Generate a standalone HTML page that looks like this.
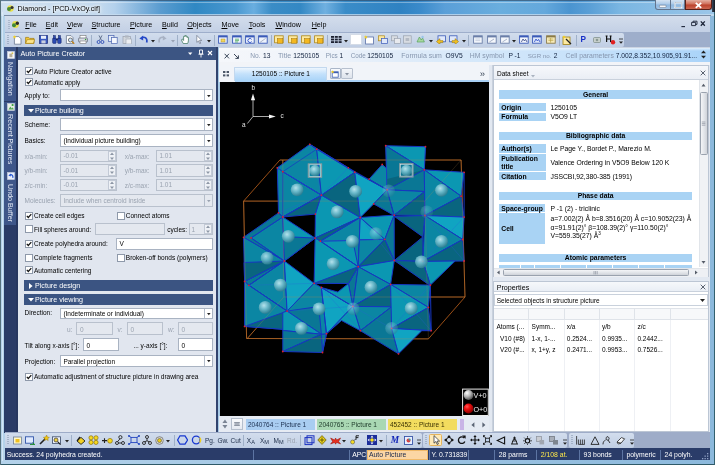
<!DOCTYPE html><html><head><meta charset="utf-8"><title>Diamond - [PCD-VxOy.cif]</title><style>
*{box-sizing:border-box;margin:0;padding:0}
html,body{width:715px;height:465px;overflow:hidden;background:#a6cae6}
body{position:relative;font-family:"Liberation Sans",sans-serif;font-size:6.5px;color:#000;line-height:1}
.a{position:absolute}
.t{position:absolute;white-space:nowrap;line-height:8px;height:8px}
.s{font-size:7.15px}
.w{color:#fff}
.g{color:#9aa3b0}
.box{position:absolute;background:#fff;border:1px solid #a9b3c2}
.dis{background:#e4e8ef;border-color:#b9c1cd}
.cb{position:absolute;width:8px;height:8px;background:#fff;border:1px solid #8e99aa}
.hd{position:absolute;background:#3b5482;color:#fff}
u{text-decoration:underline}
</style></head><body><div id="root" style="position:absolute;left:0;top:0;width:715px;height:465px;will-change:transform">
<div class="a" style="left:0px;top:0px;width:715px;height:465px;background:linear-gradient(90deg,#b4d2ea,#8cb9dc);"></div>
<div class="a" style="left:0px;top:0px;width:715px;height:16px;background:linear-gradient(90deg,#cfe0f1 0,#c2d9ee 14%,#b4d1ec 16%,#5a9cd0 22.4%,#3088c3 27.3%,#4a98d0 33%,#6aaee0 35.5%,#3a8cc6 38%,#3388c4 42%,#70b0e0 45.5%,#3a8cc8 48.3%,#2f82c2 56%,#3a8aca 58.7%,#5a9fd8 62.2%,#6aaede 70%,#64a8dc 76.2%,#4a94d0 79.7%,#5a9fd6 82.5%,#7ab6e2 86.7%,#9cc6e8 100%);"></div>
<div class="a" style="left:0px;top:0px;width:715px;height:1.4px;background:rgba(50,80,110,.7);"></div>
<div class="a" style="left:0px;top:1.6px;width:715px;height:1px;background:rgba(255,255,255,.35);"></div>
<div class="a" style="left:0px;top:14.3px;width:715px;height:1.6px;background:rgba(200,222,240,.75);"></div>
<div class="a" style="left:0px;top:463.7px;width:715px;height:1.3px;background:#2f5a68;"></div>
<div class="a" style="left:713.6px;top:10px;width:1.4px;height:455px;background:#33606e;"></div>
<div class="t s" style="left:17.5px;top:4.7px;text-shadow:0 0 3px #fff,0 0 4px #fff,0 0 5px #e8f2fc">Diamond - [PCD-VxOy.cif]</div>
<svg class="a" style="left:5px;top:4px" width="10" height="9" viewBox="0 0 10 9"><circle cx="5.5" cy="4.5" r="3.2" fill="#e8e04a"/><circle cx="4" cy="5" r="2" fill="#4a8a3a"/><circle cx="7" cy="3.5" r="1.6" fill="#333"/></svg>
<div class="a" style="left:655.2px;top:0px;width:30px;height:10px;background:linear-gradient(#d4e3f3,#a9c8e8 48%,#8db6de 52%,#a4c6e8);border:1px solid #63748c;border-top:0;border-radius:0 0 0 3px"></div>
<div class="a" style="left:670.3px;top:0px;width:1px;height:10px;background:#63748c;"></div>
<div class="a" style="left:685px;top:0px;width:27px;height:10px;background:linear-gradient(#e4b0a2,#cf6f5a 45%,#bb422c 55%,#cb6650);border:1px solid #5a2018;border-top:0;border-radius:0 0 3px 0"></div>
<svg class="a" style="left:655px;top:0px" width="57" height="10" viewBox="0 0 57 10"><rect x="4.400" y="5.200" width="6.600" height="2.200" rx=".6" fill="#fff" stroke="#5a6a80" stroke-width=".5"/><rect x="20" y="2.600" width="6.600" height="5" fill="none" stroke="#fff" stroke-width="1.300"/><rect x="20" y="2.600" width="6.600" height="5" fill="none" stroke="#5a6a80" stroke-width=".3"/><path d="M40.800 2.800l5.400 5M46.200 2.800l-5.400 5" stroke="#fff" stroke-width="1.800"/></svg>
<div class="a" style="left:712px;top:0px;width:3px;height:12px;background:linear-gradient(90deg,#3a4a5e,#10161e);"></div>
<div class="a" style="left:4px;top:15.4px;width:706.5px;height:0.9px;background:#7c8ca4;"></div>
<div class="a" style="left:4.5px;top:15.9px;width:705.5px;height:16.2px;background:linear-gradient(#d3ddec,#c3d0e5);"></div>
<div class="t s" style="left:25.2px;top:20.7px;"><u>F</u>ile</div>
<div class="t s" style="left:45.8px;top:20.7px;"><u>E</u>dit</div>
<div class="t s" style="left:67px;top:20.7px;"><u>V</u>iew</div>
<div class="t s" style="left:91.6px;top:20.7px;"><u>S</u>tructure</div>
<div class="t s" style="left:130px;top:20.7px;"><u>P</u>icture</div>
<div class="t s" style="left:162px;top:20.7px;"><u>B</u>uild</div>
<div class="t s" style="left:187.3px;top:20.7px;"><u>O</u>bjects</div>
<div class="t s" style="left:221.5px;top:20.7px;"><u>M</u>ove</div>
<div class="t s" style="left:248.7px;top:20.7px;"><u>T</u>ools</div>
<div class="t s" style="left:275.4px;top:20.7px;"><u>W</u>indow</div>
<div class="t s" style="left:311.7px;top:20.7px;"><u>H</u>elp</div>
<svg class="a" style="left:8px;top:19px" width="14" height="11" viewBox="0 0 14 11"><path d="M1 1v9" stroke="#8a9ab0" stroke-dasharray="1 1"/><circle cx="7.5" cy="5.5" r="3.4" fill="#e6df4c"/><circle cx="6" cy="6.3" r="2" fill="#3f8a3a"/><circle cx="9.3" cy="4.3" r="1.7" fill="#2a2a2a"/></svg>
<svg class="a" style="left:680px;top:20px" width="26" height="8" viewBox="0 0 26 8"><path d="M1.400 6.600h3.600" stroke="#1c2438" stroke-width="1.100"/><path d="M11.600 2.400h4v3.200h-4zM13 2.400v-1.200h4v3.200h-1.400" fill="none" stroke="#1c2438" stroke-width=".9"/><path d="M20.800 1.400l4 4.400M24.800 1.400l-4 4.400" stroke="#1c2438" stroke-width="1.300"/></svg>
<div class="a" style="left:4.5px;top:32.1px;width:705.5px;height:15px;background:#9eaecb;"></div>
<div class="a" style="left:5px;top:32.6px;width:619px;height:14px;background:linear-gradient(#d2dded,#c0cee4);border-radius:0 2px 2px 0"></div>
<svg class="a" style="left:7.2px;top:34.5px" width="2" height="10" viewBox="0 0 2 10"><path d="M1 0v10" stroke="#7f8fa8" stroke-width="1" stroke-dasharray="1 1"/></svg>
<svg class="a" style="left:13.2px;top:34.5px" width="9" height="10" viewBox="0 0 9 10"><path d="M1.400 1.600h4.400l2.200 2.200v5.400H1.400z" fill="#fff" stroke="#6a7890" stroke-width=".8"/><path d="M1.600 .2l.5 1.100 1.200.2-.9.800.2 1.200-1-.6-1.100.6.200-1.200L-.2 1.500l1.200-.2z" fill="#f6d020"/></svg>
<svg class="a" style="left:25.4px;top:35px" width="10" height="9" viewBox="0 0 10 9"><path d="M.6 2.400h3l1 1h4.400v5H.6z" fill="#f4c838" stroke="#a07808" stroke-width=".7"/><path d="M.6 8.400l1.600-3.800h7.400L8.400 8.400z" fill="#fce48a" stroke="#a07808" stroke-width=".6"/></svg>
<svg class="a" style="left:39.4px;top:35px" width="9" height="9" viewBox="0 0 9 9"><rect x=".5" y=".5" width="8" height="8" fill="#3858c0" stroke="#1c2c78" stroke-width=".7"/><rect x="2" y=".8" width="5" height="3" fill="#e8eefc"/><rect x="2.400" y="5.400" width="4.200" height="3" fill="#c8d0e0"/></svg>
<svg class="a" style="left:51.6px;top:35px" width="10" height="9" viewBox="0 0 10 9"><g fill="#2c4cb4" stroke="#142060" stroke-width=".5"><rect x=".6" y="3" width="3.600" height="5.400" rx=".8"/><rect x="5.600" y="3" width="3.600" height="5.400" rx=".8"/><rect x="1.400" y=".6" width="2" height="3"/><rect x="6.400" y=".6" width="2" height="3"/></g><rect x="4" y="3.600" width="1.800" height="1.800" fill="#142060"/></svg>
<svg class="a" style="left:65.4px;top:35px" width="10" height="9" viewBox="0 0 10 9"><path d="M1.400 .6h4.600l2 2v6H1.400z" fill="#fff" stroke="#6a7890" stroke-width=".8"/><circle cx="5.400" cy="5" r="2" fill="#cfe4f8" stroke="#444" stroke-width=".7"/><path d="M6.800 6.400l2.400 2.400" stroke="#c08010" stroke-width="1.300"/></svg>
<svg class="a" style="left:78.2px;top:35px" width="10" height="9" viewBox="0 0 10 9"><rect x="2" y=".6" width="6" height="3" fill="#fff" stroke="#777" stroke-width=".6"/><rect x=".6" y="3" width="8.800" height="4" rx=".8" fill="#d8dce4" stroke="#5a6270" stroke-width=".7"/><rect x="2" y="6" width="6" height="2.600" fill="#fff" stroke="#777" stroke-width=".6"/><circle cx="7.600" cy="4.400" r=".7" fill="#30a030"/></svg>
<div class="a" style="left:91.4px;top:34.5px;width:1px;height:11px;background:#9fb0c8;"></div>
<svg class="a" style="left:96px;top:35px" width="9" height="9" viewBox="0 0 9 9"><path d="M3 .4l2.600 5M6 .4L3.400 5.400" stroke="#5a6a88" stroke-width=".9"/><circle cx="2.600" cy="7" r="1.500" fill="none" stroke="#2c4cb4" stroke-width=".9"/><circle cx="6.400" cy="7" r="1.500" fill="none" stroke="#2c4cb4" stroke-width=".9"/></svg>
<svg class="a" style="left:108.2px;top:35px" width="10" height="9" viewBox="0 0 10 9"><rect x=".6" y=".6" width="5.400" height="6" fill="#e4ecfa" stroke="#4a64b0" stroke-width=".7"/><rect x="3.600" y="2.600" width="5.600" height="6" fill="#f4f7fd" stroke="#4a64b0" stroke-width=".7"/></svg>
<svg class="a" style="left:121.8px;top:35px" width="10" height="9" viewBox="0 0 10 9"><rect x="1" y="1.600" width="7.600" height="7" fill="#d4d8de" stroke="#9aa2ae" stroke-width=".7"/><rect x="3" y=".4" width="3.600" height="2.200" fill="#b0b6c0"/><rect x="4" y="4" width="5.400" height="5" fill="#eceef2" stroke="#9aa2ae" stroke-width=".6"/></svg>
<div class="a" style="left:135.4px;top:34.5px;width:1px;height:11px;background:#9fb0c8;"></div>
<svg class="a" style="left:139.4px;top:35px" width="9" height="9" viewBox="0 0 9 9"><path d="M7.600 7.600C8.800 3.600 6 1.400 3 2.600" fill="none" stroke="#2448c8" stroke-width="1.700"/><path d="M.4 3.400l3.800-3v5z" fill="#2448c8"/></svg>
<svg class="a" style="left:151px;top:39.5px" width="4" height="3" viewBox="0 0 4 3"><path d="M0 0h4l-2 2.4z" fill="#222"/></svg>
<svg class="a" style="left:158.4px;top:35px" width="9" height="9" viewBox="0 0 9 9"><path d="M1.400 7.600C.2 3.600 3 1.400 6 2.600" fill="none" stroke="#a8b2c4" stroke-width="1.700"/><path d="M8.600 3.400l-3.800-3v5z" fill="#a8b2c4"/></svg>
<svg class="a" style="left:170.6px;top:39.5px" width="4" height="3" viewBox="0 0 4 3"><path d="M0 0h4l-2 2.4z" fill="#98a2b4"/></svg>
<div class="a" style="left:177.4px;top:34.5px;width:1px;height:11px;background:#9fb0c8;"></div>
<svg class="a" style="left:181px;top:35px" width="10" height="9" viewBox="0 0 10 9"><path d="M2.400 8.600C1 6.600.4 5 .8 4.400s1.400.2 1.800 1V1.600c0-.8 1.200-.8 1.200 0V1c0-.8 1.200-.8 1.200 0v.6c0-.8 1.200-.8 1.200 0v1c0-.8 1.200-.8 1.200 0v3.200c0 1.400-.6 2-1 2.800z" fill="#fff" stroke="#2a6a4a" stroke-width=".7"/></svg>
<svg class="a" style="left:196.4px;top:35px" width="6" height="9" viewBox="0 0 6 9"><path d="M.8.400v7l1.700-1.500 1.200 2.700 1-.4L3.500 5.500h2.300z" fill="#fff" stroke="#5a6478" stroke-width=".6"/></svg>
<svg class="a" style="left:207px;top:39.5px" width="4" height="3" viewBox="0 0 4 3"><path d="M0 0h4l-2 2.4z" fill="#222"/></svg>
<div class="a" style="left:213.6px;top:34.5px;width:1px;height:11px;background:#9fb0c8;"></div>
<svg class="a" style="left:218px;top:35px" width="10" height="9" viewBox="0 0 10 9"><rect x=".6" y=".8" width="8.600" height="7.400" fill="#eef3fc" stroke="#3a5ab8" stroke-width=".9"/><rect x=".6" y=".8" width="8.600" height="1.600" fill="#3a5ab8"/><rect x="3" y="4" width="4" height="3" fill="#f4d860" stroke="#a08010" stroke-width=".4"/></svg>
<svg class="a" style="left:232px;top:35px" width="10" height="9" viewBox="0 0 10 9"><rect x=".6" y=".8" width="8.600" height="7.400" fill="#eef3fc" stroke="#3a5ab8" stroke-width=".9"/><rect x=".6" y=".8" width="8.600" height="1.600" fill="#3a5ab8"/><path d="M3 4.200h4M3 5.600h4M3 7h3" stroke="#38a048" stroke-width=".7"/></svg>
<svg class="a" style="left:244.8px;top:35px" width="10" height="9" viewBox="0 0 10 9"><rect x=".6" y=".8" width="8.600" height="7.400" fill="#eef3fc" stroke="#3a5ab8" stroke-width=".9"/><rect x=".6" y=".8" width="8.600" height="1.600" fill="#3a5ab8"/><path d="M6.600 6.600A2 2 0 1 1 6.600 4.400" fill="none" stroke="#2448c8" stroke-width=".9"/></svg>
<svg class="a" style="left:258px;top:35px" width="10" height="9" viewBox="0 0 10 9"><rect x=".6" y=".8" width="8.600" height="7.400" fill="#eef3fc" stroke="#3a5ab8" stroke-width=".9"/><rect x=".6" y=".8" width="8.600" height="1.600" fill="#3a5ab8"/><path d="M2 7.400l5.600-4" stroke="#9aa6bc" stroke-width=".8"/></svg>
<div class="a" style="left:270.7px;top:34.5px;width:1px;height:11px;background:#9fb0c8;"></div>
<svg class="a" style="left:274px;top:35px" width="10" height="9" viewBox="0 0 10 9"><rect x=".6" y=".8" width="8.600" height="7" fill="#fce9a0" stroke="#b08818" stroke-width=".8"/><rect x="3.400" y="3.600" width="5.400" height="4.600" fill="#f4b820" stroke="#a07008" stroke-width=".5"/></svg>
<svg class="a" style="left:287.6px;top:35px" width="10" height="9" viewBox="0 0 10 9"><rect x=".6" y=".8" width="8.600" height="7" fill="#fce9a0" stroke="#b08818" stroke-width=".8"/><rect x="3.400" y="3.600" width="5.400" height="4.600" fill="#f4b820" stroke="#a07008" stroke-width=".5"/></svg>
<svg class="a" style="left:301px;top:35px" width="10" height="9" viewBox="0 0 10 9"><rect x=".6" y=".8" width="8.600" height="7" fill="#fce9a0" stroke="#b08818" stroke-width=".8"/><rect x="3.400" y="3.600" width="5.400" height="4.600" fill="#f4b820" stroke="#a07008" stroke-width=".5"/></svg>
<svg class="a" style="left:314.4px;top:35px" width="10" height="9" viewBox="0 0 10 9"><rect x=".6" y=".8" width="8.600" height="7" fill="#fce9a0" stroke="#b08818" stroke-width=".8"/><rect x="3.400" y="3.600" width="5.400" height="4.600" fill="#f4b820" stroke="#a07008" stroke-width=".5"/></svg>
<div class="a" style="left:326.8px;top:34.5px;width:1px;height:11px;background:#9fb0c8;"></div>
<svg class="a" style="left:330.5px;top:36px" width="11" height="7" viewBox="0 0 11 7"><g fill="#1c2030"><rect x="0" y="0" width="3" height="1.800"/><rect x="3.800" y="0" width="3" height="1.800"/><rect x="7.600" y="0" width="3" height="1.800"/><rect x="0" y="2.600" width="3" height="1.800"/><rect x="3.800" y="2.600" width="3" height="1.800"/><rect x="7.600" y="2.600" width="3" height="1.800"/><rect x="0" y="5.200" width="3" height="1.800"/><rect x="3.800" y="5.200" width="3" height="1.800"/><rect x="7.600" y="5.200" width="3" height="1.800"/></g></svg>
<svg class="a" style="left:344px;top:39.5px" width="4" height="3" viewBox="0 0 4 3"><path d="M0 0h4l-2 2.4z" fill="#222"/></svg>
<div class="a" style="left:350.3px;top:34.4px;width:11.6px;height:10.4px;background:#fff;border:1px solid #d4dbe6"></div>
<svg class="a" style="left:364px;top:34.5px" width="10" height="10" viewBox="0 0 10 10"><rect x="1.600" y="2" width="7.800" height="7" fill="#fff" stroke="#5a70a8" stroke-width=".8"/><path d="M1.800 .2l.6 1.200 1.300.2-1 .9.300 1.300-1.200-.7-1.100.7.200-1.300-.9-.9 1.300-.2z" fill="#f6d020"/></svg>
<svg class="a" style="left:377.5px;top:35px" width="10" height="9" viewBox="0 0 10 9"><rect x=".6" y=".8" width="6" height="5" fill="#fce9a0" stroke="#b08818" stroke-width=".7"/><rect x="3.400" y="3.400" width="6" height="5" fill="#dfe8fa" stroke="#3a5ab8" stroke-width=".7"/></svg>
<svg class="a" style="left:391px;top:35px" width="10" height="9" viewBox="0 0 10 9"><rect x=".6" y=".8" width="6" height="5" fill="#d8dce2" stroke="#9aa2ae" stroke-width=".7"/><rect x="3.400" y="3.400" width="6" height="5" fill="#e8eaee" stroke="#9aa2ae" stroke-width=".7"/></svg>
<svg class="a" style="left:403px;top:35px" width="9" height="9" viewBox="0 0 9 9"><rect x=".6" y=".8" width="7.600" height="7.400" fill="#d8dce2" stroke="#9aa2ae" stroke-width=".7"/><rect x="2.600" y="3" width="3.600" height="3" fill="#b4bac4"/></svg>
<svg class="a" style="left:416.3px;top:35px" width="9" height="9" viewBox="0 0 9 9"><path d="M1 7l2.400-5 1.800 3 1.400-2L8.400 7z" fill="#a8d8a0" stroke="#4a9a50" stroke-width=".6"/><circle cx="6.600" cy="2" r="1.200" fill="#9ac4e8"/></svg>
<svg class="a" style="left:428.6px;top:39.5px" width="4" height="3" viewBox="0 0 4 3"><path d="M0 0h4l-2 2.4z" fill="#222"/></svg>
<svg class="a" style="left:436px;top:35px" width="10" height="9" viewBox="0 0 10 9"><rect x="2" y=".8" width="7.400" height="6" fill="#dfe8fa" stroke="#3a5ab8" stroke-width=".8"/><path d="M.4 6.600l3.600-3v2h3v2h-3v2z" fill="#f0c020" stroke="#806000" stroke-width=".4"/></svg>
<svg class="a" style="left:449.3px;top:35px" width="10" height="9" viewBox="0 0 10 9"><rect x=".6" y=".8" width="7.400" height="6" fill="#dfe8fa" stroke="#3a5ab8" stroke-width=".8"/><path d="M9.600 6.600l-3.600-3v2H3v2h3v2z" fill="#f0c020" stroke="#806000" stroke-width=".4"/></svg>
<svg class="a" style="left:462.4px;top:39.5px" width="4" height="3" viewBox="0 0 4 3"><path d="M0 0h4l-2 2.4z" fill="#222"/></svg>
<div class="a" style="left:468.3px;top:34.5px;width:1px;height:11px;background:#9fb0c8;"></div>
<svg class="a" style="left:472.7px;top:35px" width="10" height="9" viewBox="0 0 10 9"><rect x=".6" y=".8" width="8.600" height="7.400" fill="#f4f7fc" stroke="#6a7ea8" stroke-width=".9"/><rect x=".6" y=".8" width="8.600" height="1.600" fill="#6a7ea8"/><path d="M2.400 4h4.800M2.400 5.600h4.800" stroke="#b0bcd0" stroke-width=".6"/></svg>
<svg class="a" style="left:486.8px;top:35px" width="10" height="9" viewBox="0 0 10 9"><rect x=".6" y=".8" width="8.600" height="7.400" fill="#f4f7fc" stroke="#6a7ea8" stroke-width=".9"/><rect x=".6" y=".8" width="8.600" height="1.600" fill="#6a7ea8"/><path d="M2.400 7l4.600-3" stroke="#8a98b4" stroke-width=".7"/></svg>
<svg class="a" style="left:500px;top:35px" width="10" height="9" viewBox="0 0 10 9"><rect x=".6" y=".8" width="8.600" height="7.400" fill="#f4f7fc" stroke="#6a7ea8" stroke-width=".9"/><rect x=".6" y=".8" width="8.600" height="1.600" fill="#6a7ea8"/><path d="M2.400 7l4.600-3" stroke="#8a98b4" stroke-width=".7"/></svg>
<svg class="a" style="left:512.2px;top:39.5px" width="4" height="3" viewBox="0 0 4 3"><path d="M0 0h4l-2 2.4z" fill="#222"/></svg>
<svg class="a" style="left:518.6px;top:35px" width="10" height="9" viewBox="0 0 10 9"><rect x=".6" y=".8" width="8.600" height="7.400" fill="#f4f7fc" stroke="#3a5ab8" stroke-width=".9"/><rect x=".6" y=".8" width="8.600" height="1.600" fill="#3a5ab8"/><path d="M2.400 7l1.600-3 1.400 2 1.200-1.600L8 7" fill="none" stroke="#1c2c78" stroke-width=".7"/></svg>
<svg class="a" style="left:532.2px;top:35px" width="10" height="9" viewBox="0 0 10 9"><rect x=".6" y=".8" width="8.600" height="7.400" fill="#dfe8fa" stroke="#3a5ab8" stroke-width=".9"/><rect x=".6" y=".8" width="8.600" height="1.600" fill="#3a5ab8"/><path d="M2.400 7l1.600-3 1.400 2 1.200-1.600L8 7" fill="none" stroke="#2448c8" stroke-width=".8"/></svg>
<svg class="a" style="left:546px;top:35px" width="10" height="9" viewBox="0 0 10 9"><rect x=".6" y=".8" width="8.600" height="7.400" fill="#fbf0c0" stroke="#8a7a48" stroke-width=".9"/><rect x=".6" y=".8" width="8.600" height="1.600" fill="#8a7a48"/><path d="M2.400 4h5M2.400 5.600h5M4.600 3v4.600" stroke="#b09838" stroke-width=".6"/></svg>
<div class="a" style="left:558.6px;top:34.5px;width:1px;height:11px;background:#9fb0c8;"></div>
<svg class="a" style="left:562px;top:34.5px" width="10" height="10" viewBox="0 0 10 10"><rect x="1" y="2" width="7" height="7.400" fill="#fce9a0" stroke="#a08010" stroke-width=".8"/><path d="M4 4l5 5" stroke="#222" stroke-width="1.300"/><path d="M2 .2l.5 1 1.100.2-.8.800.2 1.100-1-.5-1 .5.200-1.100-.8-.8 1.100-.2z" fill="#f6d020"/></svg>
<div class="a" style="left:576.2px;top:34.5px;width:1px;height:11px;background:#9fb0c8;"></div>
<div class="t" style="left:580.400px;top:35px;font-weight:bold;font-size:8.200px;color:#1830c8;line-height:9px;height:9px">P</div>
<svg class="a" style="left:592.5px;top:36.5px" width="8" height="6" viewBox="0 0 8 6"><rect x=".5" y=".5" width="7" height="5" rx="1" fill="#c8d0cc" stroke="#7a8a84" stroke-width=".7"/><circle cx="4" cy="3" r="1.300" fill="#8a9a94"/></svg>
<svg class="a" style="left:604.8px;top:34.5px" width="11" height="10" viewBox="0 0 11 10"><path d="M1.600 1v6M5.600 1v6M1.600 4h4M.6 1h2M4.600 1h2" stroke="#111" stroke-width="1.200"/><circle cx="8" cy="7.200" r="2.200" fill="#e02020"/></svg>
<svg class="a" style="left:619px;top:38px" width="4" height="7" viewBox="0 0 4 7"><path d="M0 1h4" stroke="#222" stroke-width=".8"/><path d="M0 3.4h4l-2 2.4z" fill="#222"/></svg>
<div class="a" style="left:0px;top:0px;width:0.8px;height:465px;background:#55707c;"></div>
<div class="a" style="left:1.6px;top:12px;width:1.2px;height:449px;background:rgba(230,242,250,.6);"></div>
<div class="a" style="left:4px;top:46.6px;width:12.2px;height:386.2px;background:#2a3b66;"></div>
<div class="a" style="left:4px;top:46.6px;width:12.2px;height:54.4px;background:#3e5689;"></div>
<div class="a" style="left:4px;top:101.6px;width:12.2px;height:68px;background:#3e5689;"></div>
<div class="a" style="left:4px;top:170.2px;width:12.2px;height:54.4px;background:#3e5689;"></div>
<div class="a" style="left:16px;top:46.6px;width:1.6px;height:386.2px;background:#27375f;"></div>
<svg class="a" style="left:6.6px;top:51px" width="8" height="8" viewBox="0 0 8 8"><rect x=".4" y=".4" width="7.200" height="7.200" fill="#f4f6fa" stroke="#c8d0e0" stroke-width=".5"/><rect x="2.400" y="2.600" width="3" height="3.600" fill="#b8b098"/><rect x="4.600" y="1.400" width="1.600" height="1.600" fill="#d8c048"/></svg>
<div class="t s" style="left:6.200px;top:62.3px;color:#e3e9f4;transform-origin:0 0;transform:translate(8px,0) rotate(90deg)">Navigation</div>
<svg class="a" style="left:6.6px;top:103.4px" width="8" height="8" viewBox="0 0 8 8"><rect x=".4" y=".4" width="7.200" height="7.200" fill="#e8f0e4" stroke="#c8d0e0" stroke-width=".5"/><path d="M1.400 6.400l2-3 1.400 2 1-1.200 1 2.200z" fill="#58a858"/><circle cx="5.600" cy="2" r="1.100" fill="#38a038"/></svg>
<div class="t s" style="left:6.200px;top:114px;color:#e3e9f4;transform-origin:0 0;transform:translate(8px,0) rotate(90deg)">Recent Pictures</div>
<svg class="a" style="left:6.6px;top:172px" width="8" height="8" viewBox="0 0 8 8"><rect x=".4" y=".4" width="7.200" height="7.200" fill="#e8eefa" stroke="#c8d0e0" stroke-width=".5"/><path d="M5.800 5.800C6.400 3.400 4.600 2.200 3 3" fill="none" stroke="#2858d0" stroke-width="1.200"/><path d="M1.400 3.400l2.400-2v3.200z" fill="#2858d0"/></svg>
<div class="t s" style="left:6.200px;top:184px;color:#e3e9f4;transform-origin:0 0;transform:translate(8px,0) rotate(90deg)">Undo Buffer</div>
<div class="a" style="left:17.6px;top:46.6px;width:199px;height:13.4px;background:#3c5583;"></div>
<div class="a" style="left:17.6px;top:60px;width:199px;height:372.8px;background:#e1e6ef;"></div>
<div class="a" style="left:216.2px;top:46.6px;width:2.3px;height:386.2px;background:#31436e;"></div>
<div class="t s w" style="left:20.5px;top:50.4px;">Auto Picture Creator</div>
<svg class="a" style="left:187px;top:48px" width="28" height="11" viewBox="0 0 28 11"><path d="M1 4.5h4.4l-2.2 2.4z" fill="#fff"/><path d="M12.5 2h3v4h-3zM11.5 6.2h5M14 6.2v3.3" stroke="#fff" stroke-width=".9" fill="none"/><path d="M21 3l4 4M25 3l-4 4" stroke="#fff" stroke-width="1.1"/></svg>
<div class="cb" style="left:24.5px;top:67px"></div>
<svg class="a" style="left:24.5px;top:67px" width="8" height="8" viewBox="0 0 8 8"><path d="M1.8 3.8l1.5 1.7 3-3.4" stroke="#111" stroke-width="1.2" fill="none"/></svg>
<div class="t " style="left:34px;top:67.7px;">Auto Picture Creator active</div>
<div class="cb" style="left:24.5px;top:78px"></div>
<svg class="a" style="left:24.5px;top:78px" width="8" height="8" viewBox="0 0 8 8"><path d="M1.8 3.8l1.5 1.7 3-3.4" stroke="#111" stroke-width="1.2" fill="none"/></svg>
<div class="t " style="left:34px;top:78.5px;">Automatic apply</div>
<div class="t " style="left:24.5px;top:91.5px;">Apply to:</div>
<div class="box " style="left:60.4px;top:89.4px;width:152.6px;height:12px"></div>
<div class="a" style="left:204.0px;top:90.4px;width:1px;height:10px;background:#b4bdca;"></div>
<svg class="a" style="left:206.8px;top:94.60000000000001px" width="4" height="3" viewBox="0 0 4 3"><path d="M0 0h3.600l-1.800 2.200z" fill="#222"/></svg>
<div class="a" style="left:24.4px;top:105.2px;width:188.8px;height:10.4px;background:#3b5482;"></div>
<svg class="a" style="left:27.5px;top:108.80000000000001px" width="6" height="4" viewBox="0 0 6 4"><path d="M0 0h6l-3 3.6z" fill="#fff"/></svg>
<div class="t s w" style="left:35px;top:106.7px;">Picture building</div>
<div class="t " style="left:24.5px;top:121.1px;">Scheme:</div>
<div class="box " style="left:60.4px;top:118.2px;width:152.6px;height:12.6px"></div>
<div class="a" style="left:204.0px;top:119.2px;width:1px;height:10.6px;background:#b4bdca;"></div>
<svg class="a" style="left:206.8px;top:123.7px" width="4" height="3" viewBox="0 0 4 3"><path d="M0 0h3.600l-1.800 2.200z" fill="#222"/></svg>
<div class="t " style="left:24.5px;top:136.7px;">Basics:</div>
<div class="box " style="left:60.4px;top:134.2px;width:152.6px;height:12.6px"></div>
<div class="a" style="left:204.0px;top:135.2px;width:1px;height:10.6px;background:#b4bdca;"></div>
<svg class="a" style="left:206.8px;top:139.7px" width="4" height="3" viewBox="0 0 4 3"><path d="M0 0h3.600l-1.800 2.200z" fill="#222"/></svg>
<div class="t " style="left:63.4px;top:137.0px;">(Individual picture building)</div>
<div class="t g" style="left:24.5px;top:152.5px;">x/a-min:</div>
<div class="box dis" style="left:60.4px;top:149.7px;width:56.6px;height:12.4px"></div>
<div class="a" style="left:108.0px;top:150.7px;width:8px;height:10.4px;background:#eef1f6;border:1px solid #c3cad6"></div>
<svg class="a" style="left:110.0px;top:151.7px" width="4" height="8.4" viewBox="0 0 4 8.4"><path d="M0 3l2-2.5 2 2.5zM0 5.4l2 2.5 2-2.5z" fill="#8d97a6"/></svg>
<div class="t g" style="left:63.4px;top:152.4px;">-0.01</div>
<div class="t g" style="left:124.7px;top:152.5px;">x/a-max:</div>
<div class="box dis" style="left:156.4px;top:149.7px;width:56.6px;height:12.4px"></div>
<div class="a" style="left:204.0px;top:150.7px;width:8px;height:10.4px;background:#eef1f6;border:1px solid #c3cad6"></div>
<svg class="a" style="left:206.0px;top:151.7px" width="4" height="8.4" viewBox="0 0 4 8.4"><path d="M0 3l2-2.5 2 2.5zM0 5.4l2 2.5 2-2.5z" fill="#8d97a6"/></svg>
<div class="t g" style="left:159.4px;top:152.4px;">1.01</div>
<div class="t g" style="left:24.5px;top:167.0px;">y/b-min:</div>
<div class="box dis" style="left:60.4px;top:164.2px;width:56.6px;height:12.4px"></div>
<div class="a" style="left:108.0px;top:165.2px;width:8px;height:10.4px;background:#eef1f6;border:1px solid #c3cad6"></div>
<svg class="a" style="left:110.0px;top:166.2px" width="4" height="8.4" viewBox="0 0 4 8.4"><path d="M0 3l2-2.5 2 2.5zM0 5.4l2 2.5 2-2.5z" fill="#8d97a6"/></svg>
<div class="t g" style="left:63.4px;top:166.9px;">-0.01</div>
<div class="t g" style="left:124.7px;top:167.0px;">y/b-max:</div>
<div class="box dis" style="left:156.4px;top:164.2px;width:56.6px;height:12.4px"></div>
<div class="a" style="left:204.0px;top:165.2px;width:8px;height:10.4px;background:#eef1f6;border:1px solid #c3cad6"></div>
<svg class="a" style="left:206.0px;top:166.2px" width="4" height="8.4" viewBox="0 0 4 8.4"><path d="M0 3l2-2.5 2 2.5zM0 5.4l2 2.5 2-2.5z" fill="#8d97a6"/></svg>
<div class="t g" style="left:159.4px;top:166.9px;">1.01</div>
<div class="t g" style="left:24.5px;top:181.5px;">z/c-min:</div>
<div class="box dis" style="left:60.4px;top:178.7px;width:56.6px;height:12.4px"></div>
<div class="a" style="left:108.0px;top:179.7px;width:8px;height:10.4px;background:#eef1f6;border:1px solid #c3cad6"></div>
<svg class="a" style="left:110.0px;top:180.7px" width="4" height="8.4" viewBox="0 0 4 8.4"><path d="M0 3l2-2.5 2 2.5zM0 5.4l2 2.5 2-2.5z" fill="#8d97a6"/></svg>
<div class="t g" style="left:63.4px;top:181.4px;">-0.01</div>
<div class="t g" style="left:124.7px;top:181.5px;">z/c-max:</div>
<div class="box dis" style="left:156.4px;top:178.7px;width:56.6px;height:12.4px"></div>
<div class="a" style="left:204.0px;top:179.7px;width:8px;height:10.4px;background:#eef1f6;border:1px solid #c3cad6"></div>
<svg class="a" style="left:206.0px;top:180.7px" width="4" height="8.4" viewBox="0 0 4 8.4"><path d="M0 3l2-2.5 2 2.5zM0 5.4l2 2.5 2-2.5z" fill="#8d97a6"/></svg>
<div class="t g" style="left:159.4px;top:181.4px;">1.01</div>
<div class="t g" style="left:24.5px;top:197.4px;">Molecules:</div>
<div class="box dis" style="left:60.4px;top:194.2px;width:152.6px;height:13px"></div>
<div class="a" style="left:204.0px;top:195.2px;width:1px;height:11px;background:#b4bdca;"></div>
<svg class="a" style="left:206.8px;top:199.89999999999998px" width="4" height="3" viewBox="0 0 4 3"><path d="M0 0h3.600l-1.800 2.200z" fill="#9aa3b0"/></svg>
<div class="t g" style="left:63.4px;top:197.2px;">Include when centroid inside</div>
<div class="cb" style="left:24.5px;top:211.6px"></div>
<svg class="a" style="left:24.5px;top:211.6px" width="8" height="8" viewBox="0 0 8 8"><path d="M1.8 3.8l1.5 1.7 3-3.4" stroke="#111" stroke-width="1.2" fill="none"/></svg>
<div class="t " style="left:34px;top:212.4px;">Create cell edges</div>
<div class="cb" style="left:116.5px;top:211.6px"></div>
<div class="t " style="left:125.8px;top:212.4px;">Connect atoms</div>
<div class="cb" style="left:24.5px;top:225.2px"></div>
<div class="t " style="left:34px;top:226.1px;">Fill spheres around:</div>
<div class="box dis" style="left:94.9px;top:223px;width:70.4px;height:12.4px"></div>
<div class="t " style="left:167.2px;top:226.1px;">cycles:</div>
<div class="box dis" style="left:188.5px;top:223px;width:24.5px;height:12.4px"></div>
<div class="a" style="left:204.0px;top:224px;width:8px;height:10.4px;background:#eef1f6;border:1px solid #c3cad6"></div>
<svg class="a" style="left:206.0px;top:225px" width="4" height="8.4" viewBox="0 0 4 8.4"><path d="M0 3l2-2.5 2 2.5zM0 5.4l2 2.5 2-2.5z" fill="#8d97a6"/></svg>
<div class="t g" style="left:191.5px;top:225.7px;">1</div>
<div class="cb" style="left:24.5px;top:239.5px"></div>
<svg class="a" style="left:24.5px;top:239.5px" width="8" height="8" viewBox="0 0 8 8"><path d="M1.8 3.8l1.5 1.7 3-3.4" stroke="#111" stroke-width="1.2" fill="none"/></svg>
<div class="t " style="left:34px;top:240.3px;">Create polyhedra around:</div>
<div class="box " style="left:116px;top:237.8px;width:97px;height:11.8px"></div>
<div class="t " style="left:119.5px;top:240.3px;">V</div>
<div class="cb" style="left:24.5px;top:253.5px"></div>
<div class="t " style="left:34px;top:254.3px;">Complete fragments</div>
<div class="cb" style="left:116.5px;top:253.5px"></div>
<div class="t " style="left:125.8px;top:254.3px;">Broken-off bonds (polymers)</div>
<div class="cb" style="left:24.5px;top:266px"></div>
<svg class="a" style="left:24.5px;top:266px" width="8" height="8" viewBox="0 0 8 8"><path d="M1.8 3.8l1.5 1.7 3-3.4" stroke="#111" stroke-width="1.2" fill="none"/></svg>
<div class="t " style="left:34px;top:266.7px;">Automatic centering</div>
<div class="a" style="left:24.4px;top:280px;width:188.8px;height:11px;background:#3b5482;"></div>
<svg class="a" style="left:28.5px;top:282.5px" width="4" height="6" viewBox="0 0 4 6"><path d="M0 0v6l3.6-3z" fill="#fff"/></svg>
<div class="t s w" style="left:35px;top:281.8px;">Picture design</div>
<div class="a" style="left:24.4px;top:294px;width:188.8px;height:10.6px;background:#3b5482;"></div>
<svg class="a" style="left:27.5px;top:297.7px" width="6" height="4" viewBox="0 0 6 4"><path d="M0 0h6l-3 3.6z" fill="#fff"/></svg>
<div class="t s w" style="left:35px;top:295.6px;">Picture viewing</div>
<div class="t " style="left:24.5px;top:309.4px;">Direction:</div>
<div class="box " style="left:60.4px;top:307.8px;width:152.6px;height:11.2px"></div>
<div class="a" style="left:204.0px;top:308.8px;width:1px;height:9.2px;background:#b4bdca;"></div>
<svg class="a" style="left:206.8px;top:312.6px" width="4" height="3" viewBox="0 0 4 3"><path d="M0 0h3.600l-1.800 2.200z" fill="#222"/></svg>
<div class="t " style="left:63.4px;top:309.9px;">(Indeterminate or individual)</div>
<div class="t g" style="left:67px;top:325.7px;">u:</div>
<div class="box dis" style="left:76.4px;top:322px;width:36.2px;height:13.4px"></div>
<div class="t g" style="left:80px;top:325.7px;">0</div>
<div class="t g" style="left:117.5px;top:325.7px;">v:</div>
<div class="box dis" style="left:127px;top:322px;width:36px;height:13.4px"></div>
<div class="t g" style="left:130.6px;top:325.7px;">0</div>
<div class="t g" style="left:167.9px;top:325.7px;">w:</div>
<div class="box dis" style="left:178px;top:322px;width:35px;height:13.4px"></div>
<div class="t g" style="left:181.6px;top:325.7px;">0</div>
<div class="t " style="left:24.5px;top:341.5px;">Tilt along x-axis [&deg;]:</div>
<div class="box " style="left:83px;top:338.4px;width:36px;height:12.6px"></div>
<div class="t " style="left:86.4px;top:341.5px;">0</div>
<div class="t " style="left:133.4px;top:341.5px;">... y-axis [&deg;]:</div>
<div class="box " style="left:178px;top:338.4px;width:35px;height:12.6px"></div>
<div class="t " style="left:181.6px;top:341.5px;">0</div>
<div class="t " style="left:24.5px;top:357.7px;">Projection:</div>
<div class="box " style="left:60.4px;top:355.2px;width:152.6px;height:12px"></div>
<div class="a" style="left:204.0px;top:356.2px;width:1px;height:10px;background:#b4bdca;"></div>
<svg class="a" style="left:206.8px;top:360.4px" width="4" height="3" viewBox="0 0 4 3"><path d="M0 0h3.600l-1.800 2.200z" fill="#222"/></svg>
<div class="t " style="left:63.4px;top:357.7px;">Parallel projection</div>
<div class="cb" style="left:24.5px;top:372.6px"></div>
<svg class="a" style="left:24.5px;top:372.6px" width="8" height="8" viewBox="0 0 8 8"><path d="M1.8 3.8l1.5 1.7 3-3.4" stroke="#111" stroke-width="1.2" fill="none"/></svg>
<div class="t " style="left:34px;top:373.3px;">Automatic adjustment of structure picture in drawing area</div>
<div class="a" style="left:218.5px;top:46.6px;width:491.5px;height:15.2px;background:linear-gradient(90deg,#f5f7fb 0,#eef3fa 22%,#e0ecf9 37%,#d3e7fa 55%,#c6e1fa 75%,#a9d3f9 100%);"></div>
<div class="a" style="left:218.5px;top:46.6px;width:491.5px;height:4px;background:linear-gradient(rgba(255,255,255,.85),rgba(255,255,255,0));"></div>
<div class="a" style="left:218.5px;top:46.6px;width:491.5px;height:1px;background:#ccd4e2;"></div>
<div class="a" style="left:218.5px;top:61.6px;width:491.5px;height:6px;background:#f2f4f8;"></div>
<svg class="a" style="left:223.6px;top:52.6px" width="16" height="7" viewBox="0 0 16 7"><path d="M.6.800l4.400 4.600M5 .800L.6 5.400" stroke="#3a4658" stroke-width="1"/><path d="M10 1l4.400 4.400M14.400 2.400v3h-3" stroke="#3a4658" stroke-width="1" fill="none"/></svg>
<div class="t " style="left:250.3px;top:51.7px;font-size:6.6px;color:#8696ae">No.</div>
<div class="t " style="left:263px;top:51.7px;font-size:6.650px;color:#10203c">13</div>
<div class="t " style="left:278px;top:51.7px;font-size:7.1px;color:#8696ae">Title</div>
<div class="t " style="left:293.3px;top:51.7px;font-size:6.650px;color:#10203c">1250105</div>
<div class="t " style="left:325.8px;top:51.7px;font-size:6.3px;color:#8696ae">Pics</div>
<div class="t " style="left:339.6px;top:51.7px;font-size:6.650px;color:#10203c">1</div>
<div class="t " style="left:350.7px;top:51.7px;font-size:6.3px;color:#8696ae">Code</div>
<div class="t " style="left:367.3px;top:51.7px;font-size:6.650px;color:#10203c">1250105</div>
<div class="t " style="left:401.3px;top:51.7px;font-size:6.95px;color:#8696ae">Formula sum</div>
<div class="t " style="left:445.6px;top:51.7px;font-size:6.650px;color:#10203c">O9V5</div>
<div class="t " style="left:469.8px;top:51.7px;font-size:6.85px;color:#8696ae">HM symbol</div>
<div class="t " style="left:508.4px;top:51.7px;font-size:6.650px;color:#10203c">P -1</div>
<div class="t " style="left:527.7px;top:51.7px;font-size:6.2px;color:#8696ae">SGR no.</div>
<div class="t " style="left:553.8px;top:51.7px;font-size:6.650px;color:#10203c">2</div>
<div class="t " style="left:565.5px;top:51.7px;font-size:6.85px;color:#8696ae">Cell parameters</div>
<div class="t " style="left:615.8px;top:51.7px;font-size:6.650px;color:#10203c">7.002,8.352,10.905,91.91...</div>
<svg class="a" style="left:701.4px;top:50px" width="5" height="9" viewBox="0 0 5 9"><path d="M0 3.200h5L2.500 .4zM0 5.800h5L2.500 8.600z" fill="#222"/></svg>
<div class="a" style="left:218.5px;top:64.6px;width:270.7px;height:15.6px;background:#f1f4f9;"></div>
<div class="a" style="left:218.5px;top:80px;width:272.5px;height:1.8px;background:#a9d0f5;"></div>
<div class="a" style="left:218.5px;top:80px;width:16px;height:1.8px;background:#f2f5fa;"></div>
<svg class="a" style="left:223px;top:70.6px" width="7" height="6" viewBox="0 0 7 6"><g fill="#4a5668"><rect x="0" y="0" width="2.400" height="2"/><rect x="3.600" y="0" width="2.400" height="2"/><rect x="0" y="3.400" width="2.400" height="2"/><rect x="3.600" y="3.400" width="2.400" height="2"/></g></svg>
<div class="a" style="left:234.4px;top:66.6px;width:92.6px;height:14px;background:linear-gradient(#edf6fe,#c4e1fb 45%,#a8d3f8);border:1px solid #c3d8ee;border-bottom:0;border-radius:1px 1px 0 0"></div>
<div class="t " style="left:251.8px;top:70.3px;">1250105 :: Picture 1</div>
<div class="a" style="left:329.6px;top:68.2px;width:11px;height:11px;background:linear-gradient(#f8fafd,#dfe7f2);border:1px solid #aab6c8;border-radius:1px"></div>
<svg class="a" style="left:331.4px;top:70px" width="8" height="8" viewBox="0 0 8 8"><rect x="1.200" y="1.800" width="6" height="5.400" fill="#fff" stroke="#3f5fb0" stroke-width=".8"/><rect x="1.200" y="1.800" width="6" height="1.400" fill="#3f5fb0"/><path d="M1.600 .2l.5 1 1.100.2-.8.800.2 1.100-1-.5-1 .5.200-1.100L0 1.400l1.100-.2z" fill="#f4d020"/></svg>
<div class="a" style="left:341px;top:68.2px;width:12px;height:11px;background:linear-gradient(#f4f6fa,#dde3ec);border:1px solid #b7c0ce;border-radius:1px"></div>
<svg class="a" style="left:345px;top:73px" width="4" height="3" viewBox="0 0 4 3"><path d="M0 0h4l-2 2.400z" fill="#8a93a2"/></svg>
<div class="t " style="left:479.8px;top:69.5px;font-size:9.500px;color:#3a4658">&raquo;</div>
<div class="a" style="left:220.2px;top:81.8px;width:269px;height:334px;background:#000;"></div>
<svg class="a" style="left:220.2px;top:81.5px" width="269" height="335" viewBox="220.2 81.5 269 335"><defs><radialGradient id="sg" cx="40%" cy="35%" r="65%"><stop offset="0" stop-color="#b4e2ec"/><stop offset=".45" stop-color="#6cbacb"/><stop offset="1" stop-color="#2c7f93"/></radialGradient><radialGradient id="gg" cx="35%" cy="30%" r="70%"><stop offset="0" stop-color="#fff"/><stop offset=".5" stop-color="#b8b8b8"/><stop offset="1" stop-color="#5a5a5a"/></radialGradient><radialGradient id="rg" cx="35%" cy="30%" r="70%"><stop offset="0" stop-color="#ff5a5a"/><stop offset=".4" stop-color="#ee1010"/><stop offset="1" stop-color="#8a0000"/></radialGradient></defs><polyline points="280.1,159.5 461.3,159.5 465.2,296.5 284.0,296.5 283.0,159.5" fill="none" stroke="#c0621c" stroke-width="0.8" opacity="1"/>
<polyline points="280.1,159.5 243.8,200.6 246.8,338.0 428.6,338.4 465.2,296.5" fill="none" stroke="#c0621c" stroke-width="0.8" opacity="1"/>
<polyline points="243.8,200.6 283.0,200.6" fill="none" stroke="#c0621c" stroke-width="0.8" opacity="1"/>
<polyline points="247.5,338.0 284.0,296.5" fill="none" stroke="#c0621c" stroke-width="0.8" opacity="1"/>
<polygon points="369.3,178.6 382.4,164.0 387.0,168.0 387.3,189.3" fill="#0b86a3" stroke="#1636c2" stroke-width="1.0" stroke-linejoin="round"/>
<polygon points="310.0,143.8 277.5,167.3 283.0,171.2 321.6,194.7 316.9,148.7" fill="#0b86a3" stroke="#1636c2" stroke-width="1.0" stroke-linejoin="round"/>
<polygon points="310.0,143.8 316.9,148.7 355.0,171.7 348.5,167.3" fill="#0a7795" stroke="#1636c2" stroke-width="1.0" stroke-linejoin="round"/>
<polygon points="316.9,148.7 355.0,171.7 321.6,194.7" fill="#0b97b2" stroke="#1636c2" stroke-width="1.0" stroke-linejoin="round"/>
<polygon points="277.5,167.3 283.0,171.2 321.6,194.7 283.0,216.5 278.7,212.4" fill="#0b86a3" stroke="#1636c2" stroke-width="1.0" stroke-linejoin="round"/>
<polygon points="283.0,216.5 321.6,194.7 315.6,213.6" fill="#09657f" stroke="#1636c2" stroke-width="1.0" stroke-linejoin="round"/>
<polyline points="283.0,171.2 321.6,194.7 283.0,216.5" fill="none" stroke="#1636c2" stroke-width="1.0" opacity="1"/>
<polygon points="321.6,194.7 355.0,171.7 360.4,217.0" fill="#09657f" stroke="#1636c2" stroke-width="1.0" stroke-linejoin="round"/>
<polygon points="321.6,194.7 360.4,217.0 315.3,237.6 315.6,213.6" fill="#0b97b2" stroke="#1636c2" stroke-width="1.0" stroke-linejoin="round"/>
<polygon points="355.0,171.7 387.3,189.3 373.9,203.4 360.4,217.0" fill="#10a4c2" stroke="#1636c2" stroke-width="1.0" stroke-linejoin="round"/>
<polygon points="387.3,189.3 373.9,203.4 394.2,214.9" fill="#0a7795" stroke="#1636c2" stroke-width="1.0" stroke-linejoin="round"/>
<polygon points="385.9,145.2 425.7,146.2 424.5,169.3" fill="#0b97b2" stroke="#1636c2" stroke-width="1.0" stroke-linejoin="round"/>
<polygon points="385.9,145.2 424.5,169.3 387.3,189.3" fill="#0a7795" stroke="#1636c2" stroke-width="1.0" stroke-linejoin="round"/>
<polygon points="424.5,169.3 387.2,178.5 387.3,189.3" fill="#09657f" stroke="none" stroke-width="1.0" stroke-linejoin="round"/>
<polygon points="387.3,189.3 424.5,169.3 424.8,191.0" fill="#0a7795" stroke="#1636c2" stroke-width="1.0" stroke-linejoin="round"/>
<polygon points="387.3,189.3 424.8,191.0 394.4,214.6" fill="#0b86a3" stroke="#1636c2" stroke-width="1.0" stroke-linejoin="round"/>
<polygon points="424.8,191.0 425.1,215.0 394.4,214.6" fill="#09657f" stroke="#1636c2" stroke-width="1.0" stroke-linejoin="round"/>
<polygon points="424.5,169.3 464.3,171.8 461.3,195.7" fill="#0b97b2" stroke="#1636c2" stroke-width="1.0" stroke-linejoin="round"/>
<polygon points="424.5,169.3 461.3,195.7 425.1,215.0" fill="#0b86a3" stroke="#1636c2" stroke-width="1.0" stroke-linejoin="round"/>
<polygon points="461.3,195.7 464.3,216.6 425.1,215.0" fill="#09657f" stroke="#1636c2" stroke-width="1.0" stroke-linejoin="round"/>
<polyline points="464.3,171.8 464.3,216.6" fill="none" stroke="#1636c2" stroke-width="1.0" opacity="1"/>
<polygon points="315.3,237.6 360.4,217.0 320.6,240.7" fill="#09657f" stroke="#1636c2" stroke-width="1.0" stroke-linejoin="round"/>
<polygon points="244.8,280.9 284.6,260.5 249.1,284.8" fill="#0a7795" stroke="#1636c2" stroke-width="1.0" stroke-linejoin="round"/>
<polygon points="358.4,266.2 348.6,283.0 353.1,305.9" fill="#0a7795" stroke="#1636c2" stroke-width="1.0" stroke-linejoin="round"/>
<polygon points="326.7,333.2 321.6,333.7 322.7,352.0" fill="#0a7795" stroke="#1636c2" stroke-width="1.0" stroke-linejoin="round"/>
<polygon points="278.7,212.4 243.8,236.8 284.6,260.5 283.0,216.5" fill="#0a7795" stroke="#1636c2" stroke-width="1.0" stroke-linejoin="round"/>
<polygon points="251.3,237.4 284.6,260.5 283.0,216.5" fill="#0b86a3" stroke="#1636c2" stroke-width="1.0" stroke-linejoin="round"/>
<polygon points="283.0,216.5 315.3,237.6 284.6,260.5" fill="#0b97b2" stroke="#1636c2" stroke-width="1.0" stroke-linejoin="round"/>
<polygon points="283.6,236.0 315.3,237.6 284.6,260.5" fill="#0a7795" stroke="#1636c2" stroke-width="1.0" stroke-linejoin="round"/>
<polygon points="243.8,236.8 284.6,260.5 244.8,280.9" fill="#0b86a3" stroke="#1636c2" stroke-width="1.0" stroke-linejoin="round"/>
<polygon points="244.3,262.0 284.6,260.5 244.8,280.9" fill="#09657f" stroke="#1636c2" stroke-width="1.0" stroke-linejoin="round"/>
<polygon points="284.6,260.5 249.1,284.8 287.3,310.6" fill="#0b86a3" stroke="#1636c2" stroke-width="1.0" stroke-linejoin="round"/>
<polygon points="284.6,260.5 314.3,282.8 287.3,310.6" fill="#10a4c2" stroke="#1636c2" stroke-width="1.0" stroke-linejoin="round"/>
<polygon points="315.3,237.6 320.6,240.7 360.4,217.0 358.4,266.2" fill="#0b86a3" stroke="#1636c2" stroke-width="1.0" stroke-linejoin="round"/>
<polygon points="320.6,240.7 353.0,240.0 358.4,266.2" fill="#0b97b2" stroke="#1636c2" stroke-width="1.0" stroke-linejoin="round"/>
<polygon points="360.4,217.0 385.0,238.8 359.5,239.4" fill="#10a4c2" stroke="#1636c2" stroke-width="1.0" stroke-linejoin="round"/>
<polygon points="359.5,239.4 385.0,238.8 358.4,266.2" fill="#0b86a3" stroke="#1636c2" stroke-width="1.0" stroke-linejoin="round"/>
<polygon points="385.0,238.8 394.5,260.0 358.4,266.2" fill="#09657f" stroke="#1636c2" stroke-width="1.0" stroke-linejoin="round"/>
<polygon points="360.4,217.0 394.4,214.6 385.0,238.8" fill="#0b97b2" stroke="#1636c2" stroke-width="1.0" stroke-linejoin="round"/>
<polygon points="394.4,214.6 394.5,260.0 385.0,238.8" fill="#0a7795" stroke="#1636c2" stroke-width="1.0" stroke-linejoin="round"/>
<polygon points="315.3,237.6 320.6,240.7 358.4,266.2 348.6,283.0 314.3,282.8" fill="#0b97b2" stroke="#1636c2" stroke-width="1.0" stroke-linejoin="round"/>
<polygon points="314.3,282.8 358.4,266.2 348.6,283.0" fill="#09657f" stroke="#1636c2" stroke-width="1.0" stroke-linejoin="round"/>
<polygon points="358.4,266.2 394.5,260.0 390.8,283.9" fill="#0b97b2" stroke="#1636c2" stroke-width="1.0" stroke-linejoin="round"/>
<polygon points="394.7,216.0 425.1,215.0 423.1,236.4" fill="#09657f" stroke="#1636c2" stroke-width="1.0" stroke-linejoin="round"/>
<polygon points="423.1,236.4 423.1,260.9 394.5,260.0" fill="#09657f" stroke="#1636c2" stroke-width="1.0" stroke-linejoin="round"/>
<polygon points="425.1,215.0 464.3,216.6 462.9,239.0" fill="#10a4c2" stroke="#1636c2" stroke-width="1.0" stroke-linejoin="round"/>
<polygon points="425.1,215.0 462.9,239.0 423.1,260.9" fill="#0b86a3" stroke="#1636c2" stroke-width="1.0" stroke-linejoin="round"/>
<polygon points="423.1,260.9 462.9,239.0 464.3,260.5" fill="#09657f" stroke="#1636c2" stroke-width="1.0" stroke-linejoin="round"/>
<polygon points="423.1,260.9 455.4,260.5 430.6,284.6" fill="#0b97b2" stroke="#1636c2" stroke-width="1.0" stroke-linejoin="round"/>
<polygon points="394.5,260.0 423.1,260.9 430.6,284.6 428.0,283.4" fill="#09657f" stroke="#1636c2" stroke-width="1.0" stroke-linejoin="round"/>
<polygon points="244.8,280.9 249.1,284.8 287.3,310.6 283.0,328.8 244.8,325.9" fill="#0b86a3" stroke="#1636c2" stroke-width="1.0" stroke-linejoin="round"/>
<polygon points="244.8,325.9 287.3,310.6 283.0,328.8" fill="#09657f" stroke="#1636c2" stroke-width="1.0" stroke-linejoin="round"/>
<polygon points="314.3,282.8 321.6,287.0 326.7,333.2 321.6,333.7 287.3,310.6" fill="#0b86a3" stroke="#1636c2" stroke-width="1.0" stroke-linejoin="round"/>
<polygon points="287.3,310.6 321.6,333.7 319.0,306.0" fill="#0a7795" stroke="#1636c2" stroke-width="1.0" stroke-linejoin="round"/>
<polygon points="321.6,287.0 353.1,305.9 326.7,333.2" fill="#10a4c2" stroke="#1636c2" stroke-width="1.0" stroke-linejoin="round"/>
<polygon points="321.6,287.0 338.0,291.5 348.6,283.0 353.1,305.9" fill="#0b97b2" stroke="#1636c2" stroke-width="1.0" stroke-linejoin="round"/>
<polygon points="287.3,310.6 321.6,333.7 283.0,330.0 283.0,312.0" fill="#0b97b2" stroke="#1636c2" stroke-width="1.0" stroke-linejoin="round"/>
<polygon points="283.0,330.0 321.6,333.7 283.0,351.0" fill="#0a7795" stroke="#1636c2" stroke-width="1.0" stroke-linejoin="round"/>
<polygon points="283.0,351.0 321.6,333.7 322.7,352.0" fill="#09657f" stroke="#1636c2" stroke-width="1.0" stroke-linejoin="round"/>
<polyline points="326.7,333.2 322.7,352.0" fill="none" stroke="#1636c2" stroke-width="1.0" opacity="1"/>
<polygon points="358.4,266.2 390.8,283.9 353.1,305.9" fill="#0b86a3" stroke="#1636c2" stroke-width="1.0" stroke-linejoin="round"/>
<polygon points="353.1,305.9 390.8,283.9 391.8,306.3" fill="#09657f" stroke="#1636c2" stroke-width="1.0" stroke-linejoin="round"/>
<polygon points="353.1,305.9 391.8,306.3 360.6,330.2" fill="#0b86a3" stroke="#1636c2" stroke-width="1.0" stroke-linejoin="round"/>
<polygon points="353.1,305.9 360.6,330.2 341.7,320.0 326.7,333.2" fill="#0b97b2" stroke="#1636c2" stroke-width="1.0" stroke-linejoin="round"/>
<polygon points="360.6,330.2 391.8,306.3 391.8,327.9 398.7,353.3" fill="#0a7795" stroke="#1636c2" stroke-width="1.0" stroke-linejoin="round"/>
<polygon points="390.8,283.9 430.6,284.6 428.6,306.9" fill="#0b86a3" stroke="#1636c2" stroke-width="1.0" stroke-linejoin="round"/>
<polygon points="390.8,283.9 428.6,306.9 391.8,327.9" fill="#0b97b2" stroke="#1636c2" stroke-width="1.0" stroke-linejoin="round"/>
<polygon points="391.8,327.9 428.6,306.9 431.4,330.2" fill="#09657f" stroke="#1636c2" stroke-width="1.0" stroke-linejoin="round"/>
<polygon points="391.8,327.9 431.4,330.2 422.0,330.2 398.7,353.3" fill="#10a4c2" stroke="#1636c2" stroke-width="1.0" stroke-linejoin="round"/>
<polyline points="430.6,284.6 431.4,330.2" fill="none" stroke="#1636c2" stroke-width="1.0" opacity="1"/>
<polyline points="280.1,159.5 461.3,159.5 465.2,296.5 284.0,296.5 283.0,159.5" fill="none" stroke="#c08a4a" stroke-width="0.8" opacity="0.35"/>
<polyline points="243.8,200.6 246.8,338.0 428.6,338.4" fill="none" stroke="#c08a4a" stroke-width="0.8" opacity="0.35"/>
<polyline points="243.8,200.6 283.0,200.6 425.0,200.6" fill="none" stroke="#c08a4a" stroke-width="0.8" opacity="0.3"/>
<polyline points="247.5,338.0 284.0,296.5" fill="none" stroke="#c08a4a" stroke-width="0.8" opacity="0.3"/>
<polyline points="461.3,159.5 425.0,200.6 428.6,338.4" fill="none" stroke="#c08a4a" stroke-width="0.8" opacity="0.25"/>
<polyline points="316.9,148.7 283.0,171.2" fill="none" stroke="#1636c2" stroke-width="0.8" opacity="0.9"/>
<polyline points="310.0,143.8 348.5,167.3" fill="none" stroke="#1636c2" stroke-width="0.8" opacity="0.9"/>
<polyline points="283.0,171.2 283.0,216.5" fill="none" stroke="#1636c2" stroke-width="0.8" opacity="0.9"/>
<polyline points="251.3,237.4 284.6,260.5" fill="none" stroke="#1636c2" stroke-width="0.8" opacity="0.9"/>
<polyline points="251.3,237.4 283.0,216.5" fill="none" stroke="#1636c2" stroke-width="0.8" opacity="0.9"/>
<polyline points="249.1,284.8 284.6,260.5" fill="none" stroke="#1636c2" stroke-width="0.8" opacity="0.9"/>
<polyline points="249.1,284.8 287.3,310.6" fill="none" stroke="#1636c2" stroke-width="0.8" opacity="0.9"/>
<polyline points="320.6,240.7 360.4,217.0" fill="none" stroke="#1636c2" stroke-width="0.8" opacity="0.9"/>
<polyline points="320.6,240.7 358.4,266.2" fill="none" stroke="#1636c2" stroke-width="0.8" opacity="0.9"/>
<polyline points="321.6,287.0 353.1,305.9" fill="none" stroke="#1636c2" stroke-width="0.8" opacity="0.9"/>
<polyline points="321.6,287.0 326.7,333.2" fill="none" stroke="#1636c2" stroke-width="0.8" opacity="0.9"/>
<polyline points="348.5,167.3 387.3,189.3" fill="none" stroke="#1636c2" stroke-width="0.8" opacity="0.9"/>
<polyline points="277.5,167.3 321.6,194.7" fill="none" stroke="#2a5fd8" stroke-width="0.6" opacity="0.45"/>
<polyline points="278.7,212.4 321.6,194.7" fill="none" stroke="#2a5fd8" stroke-width="0.6" opacity="0.45"/>
<polyline points="310.0,143.8 321.6,194.7" fill="none" stroke="#2a5fd8" stroke-width="0.6" opacity="0.45"/>
<polyline points="348.5,167.3 321.6,194.7" fill="none" stroke="#2a5fd8" stroke-width="0.6" opacity="0.45"/>
<polyline points="385.9,145.2 387.3,189.3" fill="none" stroke="#2a5fd8" stroke-width="0.6" opacity="0.45"/>
<polyline points="425.7,146.2 424.5,169.3" fill="none" stroke="#2a5fd8" stroke-width="0.6" opacity="0.45"/>
<polyline points="249.1,284.8 314.3,282.8" fill="none" stroke="#2a5fd8" stroke-width="0.6" opacity="0.45"/>
<polyline points="287.3,310.6 353.1,305.9" fill="none" stroke="#2a5fd8" stroke-width="0.6" opacity="0.45"/>
<polyline points="390.8,283.9 431.4,330.2" fill="none" stroke="#2a5fd8" stroke-width="0.6" opacity="0.45"/>
<polyline points="391.8,327.9 430.6,284.6" fill="none" stroke="#2a5fd8" stroke-width="0.6" opacity="0.45"/>
<polyline points="425.1,215.0 464.3,260.5" fill="none" stroke="#2a5fd8" stroke-width="0.6" opacity="0.45"/>
<polyline points="464.3,216.6 423.1,260.9" fill="none" stroke="#2a5fd8" stroke-width="0.6" opacity="0.45"/>
<polyline points="320.6,240.7 385.0,238.8" fill="none" stroke="#2a5fd8" stroke-width="0.6" opacity="0.45"/>
<polyline points="360.4,217.0 394.5,260.0" fill="none" stroke="#2a5fd8" stroke-width="0.6" opacity="0.45"/>
<polyline points="321.6,287.0 360.6,330.2" fill="none" stroke="#2a5fd8" stroke-width="0.6" opacity="0.45"/>
<polyline points="353.1,305.9 391.8,327.9" fill="none" stroke="#2a5fd8" stroke-width="0.6" opacity="0.45"/>
<circle cx="310" cy="143.8" r="0.9" fill="#e0202c"/>
<circle cx="316.9" cy="148.7" r="0.9" fill="#e0202c"/>
<circle cx="277.5" cy="167.3" r="0.9" fill="#e0202c"/>
<circle cx="283" cy="171.2" r="0.9" fill="#e0202c"/>
<circle cx="348.5" cy="167.3" r="0.9" fill="#e0202c"/>
<circle cx="355" cy="171.7" r="0.9" fill="#e0202c"/>
<circle cx="321.6" cy="194.7" r="0.9" fill="#e0202c"/>
<circle cx="278.7" cy="212.4" r="0.9" fill="#e0202c"/>
<circle cx="283" cy="216.5" r="0.9" fill="#e0202c"/>
<circle cx="315.6" cy="213.6" r="0.9" fill="#e0202c"/>
<circle cx="360.4" cy="217" r="0.9" fill="#e0202c"/>
<circle cx="315.3" cy="237.6" r="0.9" fill="#e0202c"/>
<circle cx="320.6" cy="240.7" r="0.9" fill="#e0202c"/>
<circle cx="243.8" cy="236.8" r="0.9" fill="#e0202c"/>
<circle cx="251.3" cy="237.4" r="0.9" fill="#e0202c"/>
<circle cx="284.6" cy="260.5" r="0.9" fill="#e0202c"/>
<circle cx="244.8" cy="280.9" r="0.9" fill="#e0202c"/>
<circle cx="249.1" cy="284.8" r="0.9" fill="#e0202c"/>
<circle cx="314.3" cy="282.8" r="0.9" fill="#e0202c"/>
<circle cx="321.6" cy="287" r="0.9" fill="#e0202c"/>
<circle cx="358.4" cy="266.2" r="0.9" fill="#e0202c"/>
<circle cx="244.8" cy="325.9" r="0.9" fill="#e0202c"/>
<circle cx="287.3" cy="310.6" r="0.9" fill="#e0202c"/>
<circle cx="283" cy="351" r="0.9" fill="#e0202c"/>
<circle cx="322.7" cy="352" r="0.9" fill="#e0202c"/>
<circle cx="326.7" cy="333.2" r="0.9" fill="#e0202c"/>
<circle cx="353.1" cy="305.9" r="0.9" fill="#e0202c"/>
<circle cx="360.6" cy="330.2" r="0.9" fill="#e0202c"/>
<circle cx="398.7" cy="353.3" r="0.9" fill="#e0202c"/>
<circle cx="391.8" cy="327.9" r="0.9" fill="#e0202c"/>
<circle cx="431.4" cy="330.2" r="0.9" fill="#e0202c"/>
<circle cx="428.6" cy="306.9" r="0.9" fill="#e0202c"/>
<circle cx="390.8" cy="283.9" r="0.9" fill="#e0202c"/>
<circle cx="430.6" cy="284.6" r="0.9" fill="#e0202c"/>
<circle cx="394.5" cy="260" r="0.9" fill="#e0202c"/>
<circle cx="423.1" cy="260.9" r="0.9" fill="#e0202c"/>
<circle cx="385" cy="238.8" r="0.9" fill="#e0202c"/>
<circle cx="394.4" cy="214.6" r="0.9" fill="#e0202c"/>
<circle cx="425.1" cy="215" r="0.9" fill="#e0202c"/>
<circle cx="464.3" cy="216.6" r="0.9" fill="#e0202c"/>
<circle cx="462.9" cy="239" r="0.9" fill="#e0202c"/>
<circle cx="464.3" cy="260.5" r="0.9" fill="#e0202c"/>
<circle cx="385.9" cy="145.2" r="0.9" fill="#e0202c"/>
<circle cx="425.7" cy="146.2" r="0.9" fill="#e0202c"/>
<circle cx="424.5" cy="169.3" r="0.9" fill="#e0202c"/>
<circle cx="387.3" cy="189.3" r="0.9" fill="#e0202c"/>
<circle cx="464.3" cy="171.8" r="0.9" fill="#e0202c"/>
<circle cx="461.3" cy="195.7" r="0.9" fill="#e0202c"/>
<circle cx="382.4" cy="164" r="0.9" fill="#e0202c"/>
<circle cx="369.3" cy="178.6" r="0.9" fill="#e0202c"/>
<circle cx="373.9" cy="203.4" r="0.9" fill="#e0202c"/>
<circle cx="297.3" cy="189.3" r="6.4" fill="url(#sg)" opacity="1"/>
<circle cx="355.8" cy="190.8" r="6.4" fill="url(#sg)" opacity="1"/>
<circle cx="337.4" cy="211.4" r="6.4" fill="url(#sg)" opacity="1"/>
<circle cx="441.7" cy="189.8" r="6.4" fill="url(#sg)" opacity="1"/>
<circle cx="388.9" cy="190.4" r="6.4" fill="url(#sg)" opacity="0.35"/>
<circle cx="427" cy="211.4" r="6.4" fill="url(#sg)" opacity="0.3"/>
<circle cx="288.5" cy="235.8" r="6.4" fill="url(#sg)" opacity="1"/>
<circle cx="267.3" cy="257.6" r="6.4" fill="url(#sg)" opacity="0.9"/>
<circle cx="352.5" cy="240.9" r="6.4" fill="url(#sg)" opacity="1"/>
<circle cx="333.3" cy="263.3" r="6.4" fill="url(#sg)" opacity="1"/>
<circle cx="376.1" cy="233.1" r="6.4" fill="url(#sg)" opacity="0.55"/>
<circle cx="441.7" cy="240.9" r="6.4" fill="url(#sg)" opacity="1"/>
<circle cx="421.6" cy="261.3" r="6.4" fill="url(#sg)" opacity="0.9"/>
<circle cx="280.6" cy="284.6" r="6.4" fill="url(#sg)" opacity="1"/>
<circle cx="265.4" cy="306.9" r="6.4" fill="url(#sg)" opacity="1"/>
<circle cx="301.6" cy="327.9" r="6.4" fill="url(#sg)" opacity="1"/>
<circle cx="319.2" cy="308.3" r="6.4" fill="url(#sg)" opacity="1"/>
<circle cx="353.5" cy="308.3" r="6.4" fill="url(#sg)" opacity="0.5"/>
<circle cx="371.2" cy="286.7" r="6.4" fill="url(#sg)" opacity="1"/>
<circle cx="411.4" cy="307.9" r="6.4" fill="url(#sg)" opacity="1"/>
<circle cx="391.8" cy="327.9" r="6.4" fill="url(#sg)" opacity="0.45"/>
<circle cx="315.2" cy="170.1" r="5.6" fill="url(#sg)" opacity="1"/>
<rect x="308.5" y="163.4" width="13.3" height="13.3" fill="none" stroke="#8e9ea2" stroke-width="1.1"/>
<rect x="309.4" y="164.3" width="11.5" height="11.5" fill="none" stroke="#d8e4e6" stroke-width=".6"/>
<circle cx="406.59999999999997" cy="169.89999999999998" r="5.6" fill="url(#sg)" opacity="1"/>
<rect x="399.9" y="163.2" width="13.3" height="13.3" fill="none" stroke="#8e9ea2" stroke-width="1.1"/>
<rect x="400.79999999999995" y="164.1" width="11.5" height="11.5" fill="none" stroke="#d8e4e6" stroke-width=".6"/><g stroke="#d4d4d4" stroke-width=".8" fill="#f4f4f4"><path d="M253.200 116V99M253.200 116H270M253.200 116l-5.600 7" fill="none"/><path d="M253.200 93.100l-2.100 6.700h4.200zM275.900 116l-6.700-2.100v4.200z" stroke="none"/></g><g fill="#e4e4e4" font-family="Liberation Sans, sans-serif" font-size="6.400"><text x="251.600" y="89.300">b</text><text x="280.800" y="117">c</text><text x="242.300" y="126.600">a</text></g><rect x="462.800" y="388.600" width="25.700" height="26.400" fill="#000" stroke="#ececec" stroke-width="1"/><circle cx="468.700" cy="394.500" r="4.900" fill="url(#gg)"/><circle cx="468.700" cy="408" r="4.900" fill="url(#rg)"/><g fill="#f0f0f0" font-family="Liberation Sans, sans-serif" font-size="7.200"><text x="473.800" y="397.600">V+0</text><text x="473.600" y="411.200">O+0</text></g></svg>
<div class="a" style="left:218.5px;top:415.8px;width:272.5px;height:16.8px;background:#e6ebf3;"></div>
<svg class="a" style="left:222px;top:419.2px" width="6" height="10" viewBox="0 0 6 10"><path d="M.4 4h5L3 .6zM.4 6h5L3 9.400z" fill="#7a8494"/></svg>
<div class="a" style="left:231px;top:418.4px;width:11.6px;height:11.8px;background:linear-gradient(#fafbfd,#e4e9f1);border:1px solid #b5bfcd"></div>
<svg class="a" style="left:234px;top:422.4px" width="6" height="4" viewBox="0 0 6 4"><path d="M0 .5h6M0 2h6M0 3.500h6M2 0v4M4 0v4" stroke="#6a7484" stroke-width=".6"/></svg>
<div class="a" style="left:245.8px;top:419px;width:69.2px;height:11px;background:#a9cdf1;"></div>
<div class="t " style="left:248px;top:421.1px;color:#1c3050">2040764 :: Picture 1</div>
<div class="a" style="left:316.6px;top:419px;width:69.6px;height:11px;background:#a9d8b3;"></div>
<div class="t " style="left:318.8px;top:421.1px;color:#1c3828">2040765 :: Picture 1</div>
<div class="a" style="left:387.8px;top:419px;width:69.4px;height:11px;background:#f2dc5e;"></div>
<div class="t " style="left:390px;top:421.1px;color:#3a3000">452452 :: Picture 1</div>
<div class="a" style="left:459.6px;top:419px;width:4.6px;height:11px;background:#c9b4e6;"></div>
<svg class="a" style="left:470.6px;top:421.8px" width="16" height="6" viewBox="0 0 16 6"><path d="M3.400 .2v5.400L.4 2.900z" fill="#5a6474"/><path d="M11.400 .2v5.400l3-2.700z" fill="#5a6474"/></svg>
<div class="a" style="left:489.2px;top:64.6px;width:220.8px;height:368px;background:#e2e8f1;"></div>
<div class="a" style="left:492px;top:64.6px;width:0.8px;height:368px;background:#c9d1dd;"></div>
<div class="a" style="left:492.8px;top:64.8px;width:216px;height:212.6px;background:#fff;border:1px solid #bcc6d4"></div>
<div class="a" style="left:493.8px;top:65.8px;width:214px;height:13.8px;background:linear-gradient(#f6f8fb,#eaeef5);border-bottom:1px solid #c9d1dc"></div>
<div class="t " style="left:497px;top:69.5px;">Data sheet</div>
<svg class="a" style="left:531px;top:75px" width="4" height="3" viewBox="0 0 4 3"><path d="M0 0h4l-2 2.5z" fill="#aab3c0"/></svg>
<svg class="a" style="left:699.5px;top:70px" width="6" height="6" viewBox="0 0 6 6"><path d="M.7.7l4.6 4.6M5.3.7L.7 5.3" stroke="#5a6270" stroke-width="1"/></svg>
<div class="a" style="left:499.1px;top:90px;width:193px;height:8.5px;background:#a9d3f4;"></div>
<div class="t" style="left:499.1px;top:90.7px;width:193px;text-align:center;font-weight:bold;font-size:6.8px">General</div>
<div class="a" style="left:499.1px;top:103.3px;width:47px;height:8px;background:#a9d3f4;"></div>
<div class="t" style="left:501.3px;top:103.7px;font-weight:bold;font-size:6.8px;white-space:normal;width:47px;line-height:7.9px;height:auto">Origin</div>
<div class="t" style="left:550.5px;top:103.7px;font-size:6.8px;line-height:8.6px;height:auto">1250105</div>
<div class="a" style="left:499.1px;top:112.8px;width:47px;height:8.2px;background:#a9d3f4;"></div>
<div class="t" style="left:501.3px;top:113.3px;font-weight:bold;font-size:6.8px;white-space:normal;width:47px;line-height:7.9px;height:auto">Formula</div>
<div class="t" style="left:550.5px;top:113.3px;font-size:6.8px;line-height:8.6px;height:auto">V5O9 LT</div>
<div class="a" style="left:499.1px;top:131.8px;width:193px;height:8.4px;background:#a9d3f4;"></div>
<div class="t" style="left:499.1px;top:132.4px;width:193px;text-align:center;font-weight:bold;font-size:6.8px">Bibliographic data</div>
<div class="a" style="left:499.1px;top:144.4px;width:47px;height:8.2px;background:#a9d3f4;"></div>
<div class="t" style="left:501.3px;top:144.9px;font-weight:bold;font-size:6.8px;white-space:normal;width:47px;line-height:7.9px;height:auto">Author(s)</div>
<div class="t" style="left:550.5px;top:144.9px;font-size:6.8px;line-height:8.6px;height:auto">Le Page Y., Bordet P., Marezio M.</div>
<div class="a" style="left:499.1px;top:153.8px;width:47px;height:17.4px;background:#a9d3f4;"></div>
<div class="t" style="left:501.3px;top:154.8px;font-weight:bold;font-size:6.8px;white-space:normal;width:47px;line-height:7.9px;height:auto">Publication title</div>
<div class="t" style="left:550.5px;top:158.9px;font-size:6.8px;line-height:8.6px;height:auto">Valence Ordering in V5O9 Below 120 K</div>
<div class="a" style="left:499.1px;top:172.3px;width:47px;height:8px;background:#a9d3f4;"></div>
<div class="t" style="left:501.3px;top:172.7px;font-weight:bold;font-size:6.8px;white-space:normal;width:47px;line-height:7.9px;height:auto">Citation</div>
<div class="t" style="left:550.5px;top:172.7px;font-size:6.8px;line-height:8.6px;height:auto">JSSCBI,92,380-385 (1991)</div>
<div class="a" style="left:499.1px;top:191.6px;width:193px;height:8.4px;background:#a9d3f4;"></div>
<div class="t" style="left:499.1px;top:192.2px;width:193px;text-align:center;font-weight:bold;font-size:6.8px">Phase data</div>
<div class="a" style="left:499.1px;top:204.3px;width:45.5px;height:8.2px;background:#a9d3f4;"></div>
<div class="t" style="left:501.3px;top:204.8px;font-weight:bold;font-size:6.8px;white-space:normal;width:45.5px;line-height:7.9px;height:auto">Space-group</div>
<div class="t" style="left:550.5px;top:204.8px;font-size:6.8px;line-height:8.6px;height:auto">P -1 (2) - triclinic</div>
<div class="a" style="left:499.1px;top:213.4px;width:45.5px;height:30.2px;background:#a9d3f4;"></div>
<div class="t" style="left:501.3px;top:224.9px;font-weight:bold;font-size:6.8px;white-space:normal;width:45.5px;line-height:7.9px;height:auto">Cell</div>
<div class="t" style="left:550.5px;top:215.2px;font-size:6.8px;line-height:8.6px;height:auto">a=7.002(2) &#197; b=8.3516(20) &#197; c=10.9052(23) &#197;<br>&alpha;=91.91(2)&deg; &beta;=108.39(2)&deg; &gamma;=110.50(2)&deg;<br>V=559.35(27) &#197;<sup style="font-size:4.6px;line-height:0">3</sup></div>
<div class="a" style="left:499.1px;top:253.6px;width:193px;height:8.4px;background:#a9d3f4;"></div>
<div class="t" style="left:499.1px;top:254.2px;width:193px;text-align:center;font-weight:bold;font-size:6.8px">Atomic parameters</div>
<div class="a" style="left:499.1px;top:265.2px;width:21px;height:2.6px;background:#a9d3f4;"></div>
<div class="a" style="left:521px;top:265.2px;width:13px;height:2.6px;background:#a9d3f4;"></div>
<div class="a" style="left:535px;top:265.2px;width:25px;height:2.6px;background:#a9d3f4;"></div>
<div class="a" style="left:561px;top:265.2px;width:25px;height:2.6px;background:#a9d3f4;"></div>
<div class="a" style="left:587px;top:265.2px;width:25px;height:2.6px;background:#a9d3f4;"></div>
<div class="a" style="left:613px;top:265.2px;width:25px;height:2.6px;background:#a9d3f4;"></div>
<div class="a" style="left:639px;top:265.2px;width:25px;height:2.6px;background:#a9d3f4;"></div>
<div class="a" style="left:665px;top:265.2px;width:27px;height:2.6px;background:#a9d3f4;"></div>
<div class="a" style="left:699px;top:80px;width:9px;height:187.4px;background:#f0f2f5;border-left:1px solid #e1e5ea"></div>
<div class="a" style="left:699.6px;top:92.2px;width:8px;height:62.6px;background:linear-gradient(90deg,#f4f5f7,#dfe2e7 60%,#cfd3d9);border:1px solid #9aa2ae;border-radius:1.5px"></div>
<svg class="a" style="left:699px;top:80px" width="9" height="188" viewBox="0 0 9 188"><path d="M2.5 6.6h4L4.5 3.8z" fill="#555c68"/><path d="M2.5 181h4l-2 2.8z" fill="#555c68"/><path d="M2.8 42h3.6M2.8 43.6h3.6M2.8 45.2h3.6" stroke="#7d8592" stroke-width=".6"/></svg>
<div class="a" style="left:493.8px;top:267.8px;width:214px;height:8.8px;background:#eef0f4;border-top:1px solid #e1e5ea"></div>
<div class="a" style="left:503px;top:268.6px;width:185.6px;height:7.6px;background:linear-gradient(#f4f5f7,#dfe2e7 60%,#cfd3d9);border:1px solid #9aa2ae;border-radius:1.5px"></div>
<svg class="a" style="left:493.8px;top:268px" width="214" height="9" viewBox="0 0 214 9"><path d="M5.6 2.6v4L3 4.6z" fill="#555c68"/><path d="M201 2.6v4l2.6-2z" fill="#555c68"/><path d="M100 3v3.4M101.6 3v3.4M103.2 3v3.4" stroke="#7d8592" stroke-width=".6"/></svg>
<div class="a" style="left:492.8px;top:280.6px;width:216px;height:151px;background:#fff;border:1px solid #bcc6d4"></div>
<div class="a" style="left:493.8px;top:281.6px;width:214px;height:10.6px;background:linear-gradient(#f6f8fb,#e9eef5);border-bottom:1px solid #c9d1dc"></div>
<div class="t s" style="left:496.7px;top:283.9px;">Properties</div>
<svg class="a" style="left:699.5px;top:284px" width="6" height="6" viewBox="0 0 6 6"><path d="M.7.7l4.6 4.6M5.3.7L.7 5.3" stroke="#5a6270" stroke-width="1"/></svg>
<div class="a" style="left:493.8px;top:293.6px;width:214px;height:12px;background:#fff;border:1px solid #c9d1dc"></div>
<div class="t " style="left:496.7px;top:296.5px;">Selected objects in structure picture</div>
<svg class="a" style="left:700px;top:299px" width="5" height="3" viewBox="0 0 5 3"><path d="M0 0h5l-2.5 3z" fill="#222"/></svg>
<div class="a" style="left:493.8px;top:308.4px;width:214px;height:11.2px;background:#f7f8fa;border-top:1px solid #dfe3e9;border-bottom:1px solid #dfe3e9"></div>
<div class="a" style="left:528.2px;top:319.6px;width:1px;height:111px;background:#eef0f4;"></div>
<div class="a" style="left:528.2px;top:308.4px;width:1px;height:11.2px;background:#dfe3e9;"></div>
<div class="a" style="left:563.5px;top:319.6px;width:1px;height:111px;background:#eef0f4;"></div>
<div class="a" style="left:563.5px;top:308.4px;width:1px;height:11.2px;background:#dfe3e9;"></div>
<div class="a" style="left:598.7px;top:319.6px;width:1px;height:111px;background:#eef0f4;"></div>
<div class="a" style="left:598.7px;top:308.4px;width:1px;height:11.2px;background:#dfe3e9;"></div>
<div class="a" style="left:634px;top:319.6px;width:1px;height:111px;background:#eef0f4;"></div>
<div class="a" style="left:634px;top:308.4px;width:1px;height:11.2px;background:#dfe3e9;"></div>
<div class="a" style="left:669.6px;top:319.6px;width:1px;height:111px;background:#eef0f4;"></div>
<div class="a" style="left:669.6px;top:308.4px;width:1px;height:11.2px;background:#dfe3e9;"></div>
<div class="t " style="left:496.4px;top:322.8px;">Atoms (...</div>
<div class="t " style="left:531.6px;top:322.8px;">Symm...</div>
<div class="t " style="left:566.8px;top:322.8px;">x/a</div>
<div class="t " style="left:602px;top:322.8px;">y/b</div>
<div class="t " style="left:637.4px;top:322.8px;">z/c</div>
<div class="t " style="left:496.4px;top:334.6px;">&nbsp;&nbsp;V10 (#8)</div>
<div class="t " style="left:531.6px;top:334.6px;">1-x, 1-...</div>
<div class="t " style="left:566.8px;top:334.6px;">0.2524...</div>
<div class="t " style="left:602px;top:334.6px;">0.9935...</div>
<div class="t " style="left:637.4px;top:334.6px;">0.2442...</div>
<div class="t " style="left:496.4px;top:346.3px;">&nbsp;&nbsp;V20 (#...</div>
<div class="t " style="left:531.6px;top:346.3px;">x, 1+y, z</div>
<div class="t " style="left:566.8px;top:346.3px;">0.2471...</div>
<div class="t " style="left:602px;top:346.3px;">0.9953...</div>
<div class="t " style="left:637.4px;top:346.3px;">0.7526...</div>
<div class="a" style="left:4.5px;top:432.4px;width:705.5px;height:16px;background:#9eacc8;"></div>
<div class="a" style="left:5px;top:433px;width:417px;height:15px;background:linear-gradient(#d2dded,#c0cee4);border-radius:0 2px 2px 0"></div>
<div class="a" style="left:423px;top:433px;width:144px;height:15px;background:linear-gradient(#d2dded,#c0cee4);border-radius:2px"></div>
<div class="a" style="left:569.4px;top:433px;width:64.6px;height:15px;background:linear-gradient(#d2dded,#c0cee4);border-radius:2px"></div>
<svg class="a" style="left:7.2px;top:435px" width="2" height="10" viewBox="0 0 2 10"><path d="M1 0v10" stroke="#7f8fa8" stroke-width="1" stroke-dasharray="1 1"/></svg>
<svg class="a" style="left:12.8px;top:435.5px" width="9" height="9" viewBox="0 0 9 9"><rect x=".5" y="1" width="8" height="7" fill="#fff7c8" stroke="#6f7f9a" stroke-width=".8"/><rect x="2.5" y="3" width="4" height="3.4" fill="#f0c020"/></svg>
<svg class="a" style="left:25px;top:435.5px" width="10" height="9" viewBox="0 0 10 9"><rect x=".5" y=".8" width="8" height="6.4" fill="#dfeaff" stroke="#3054a8" stroke-width=".9"/><path d="M5 8.4h4.6M7.6 6.6l2 1.8-2 1.6" stroke="#1a8a2a" stroke-width="1" fill="none"/></svg>
<svg class="a" style="left:38.6px;top:435.0px" width="11" height="10" viewBox="0 0 11 10"><path d="M1 9l6-6" stroke="#222" stroke-width="1.6"/><path d="M7.6 0l.8 2 2 .4-1.6 1.2.4 2-1.8-1-1.8 1 .4-2L4.4 2.4l2.2-.4z" fill="#f4c814" stroke="#8a6a00" stroke-width=".4"/></svg>
<svg class="a" style="left:52px;top:435.5px" width="10" height="9" viewBox="0 0 10 9"><rect x=".5" y=".8" width="8" height="6.6" fill="#f2f5fb" stroke="#4a5a78" stroke-width=".9"/><circle cx="4" cy="4" r="2" fill="#f0d040" stroke="#333" stroke-width=".7"/><path d="M5.6 5.6l3 3" stroke="#222" stroke-width="1.2"/></svg>
<svg class="a" style="left:64.6px;top:440px" width="4" height="3" viewBox="0 0 4 3"><path d="M0 0h4l-2 2.4z" fill="#222"/></svg>
<div class="a" style="left:71px;top:435px;width:1px;height:11px;background:#9fb0c8;"></div>
<svg class="a" style="left:75.5px;top:435.5px" width="10" height="9" viewBox="0 0 10 9"><path d="M1 5l4-3.6 4 3.6-4 3.4z" fill="#f2d024" stroke="#222" stroke-width=".9"/><path d="M1 5l3-4" stroke="#222" stroke-width="1.3"/></svg>
<svg class="a" style="left:88px;top:435.0px" width="11" height="10" viewBox="0 0 11 10"><g fill="#f6d820" stroke="#7a6200" stroke-width=".6"><circle cx="3" cy="2.8" r="2.1"/><circle cx="8" cy="2.8" r="2.1"/><circle cx="3" cy="7.4" r="2.1"/><circle cx="8" cy="7.4" r="2.1"/></g></svg>
<svg class="a" style="left:101.7px;top:435.5px" width="11" height="9" viewBox="0 0 11 9"><path d="M0 4.6h5M2.5 2.2v4.8" stroke="#222" stroke-width="1.1"/><circle cx="8" cy="4.8" r="2.4" fill="#f6d820" stroke="#7a6200" stroke-width=".6"/></svg>
<svg class="a" style="left:115px;top:435.0px" width="10" height="10" viewBox="0 0 10 10"><g fill="none" stroke="#222" stroke-width=".9"><circle cx="5.4" cy="2.2" r="1.6"/><circle cx="2" cy="8" r="1.5"/><circle cx="8" cy="8" r="1.5"/><path d="M5 3.8L2.6 6.6M3.4 8h3.2"/></g></svg>
<svg class="a" style="left:127.6px;top:435.0px" width="12" height="10" viewBox="0 0 12 10"><g fill="none" stroke="#2244c0" stroke-width=".9"><rect x="3" y="2.4" width="6" height="5.2"/><path d="M3 2.4L.8.8M9 2.4L11.2.8M3 7.6L.8 9.2M9 7.6l2.2 1.6"/></g><g fill="#2244c0"><circle cx="1" cy="1" r="1"/><circle cx="11" cy="1" r="1"/><circle cx="1" cy="9" r="1"/><circle cx="11" cy="9" r="1"/></g></svg>
<svg class="a" style="left:141.7px;top:435.0px" width="10" height="10" viewBox="0 0 10 10"><g fill="none" stroke="#222" stroke-width=".9"><circle cx="5" cy="2" r="1.5"/><circle cx="2" cy="8" r="1.5"/><circle cx="8" cy="8" r="1.5"/><path d="M5 3.6v2.2M5 5.8L2.6 6.8M5 5.8l2.4 1"/></g></svg>
<svg class="a" style="left:155px;top:435.5px" width="9" height="9" viewBox="0 0 9 9"><circle cx="4.5" cy="4.5" r="3.8" fill="#d8d8d0" stroke="#666" stroke-width=".7"/><circle cx="4.5" cy="4.5" r="2" fill="#e8c818" stroke="#444" stroke-width=".5"/></svg>
<svg class="a" style="left:166.2px;top:440px" width="4" height="3" viewBox="0 0 4 3"><path d="M0 0h4l-2 2.4z" fill="#222"/></svg>
<div class="a" style="left:173.5px;top:435px;width:1px;height:11px;background:#9fb0c8;"></div>
<svg class="a" style="left:177.2px;top:435.0px" width="11" height="10" viewBox="0 0 11 10"><path d="M3 .8h5l2.6 4.2L8 9.2H3L.6 5z" fill="none" stroke="#1838d0" stroke-width="1.3"/></svg>
<svg class="a" style="left:190.7px;top:435.0px" width="11" height="10" viewBox="0 0 11 10"><circle cx="5.2" cy="5" r="3.8" fill="none" stroke="#1838d0" stroke-width="1.3"/><path d="M8.6 2.6a4 4 0 0 1 0 5" stroke="#f0d020" stroke-width="1.5" fill="none"/></svg>
<div class="t " style="left:205px;top:437.1px;color:#1c2c48">Pg.</div>
<div class="t " style="left:217.4px;top:437.1px;color:#1c2c48">Gw.</div>
<div class="t " style="left:230.6px;top:437.1px;color:#1c2c48">Cut</div>
<div class="a" style="left:243.2px;top:435px;width:1px;height:11px;background:#9fb0c8;"></div>
<div class="t " style="left:246.8px;top:436.7px;color:#1c2c48">X<span style="font-size:5.6px;position:relative;top:1.4px">A</span></div>
<div class="t " style="left:260px;top:436.7px;color:#1c2c48">X<span style="font-size:5.6px;position:relative;top:1.4px">M</span></div>
<div class="t " style="left:273.5px;top:436.7px;color:#1c2c48">M<span style="font-size:5.6px;position:relative;top:1.4px">M</span></div>
<div class="t g" style="left:287px;top:437.1px;">Rd.</div>
<div class="a" style="left:299.5px;top:435px;width:1px;height:11px;background:#9fb0c8;"></div>
<svg class="a" style="left:303.7px;top:434.5px" width="11" height="11" viewBox="0 0 11 11"><g fill="none" stroke="#1a30c0" stroke-width="1"><rect x="1" y="2.6" width="7" height="7"/><rect x="3" y=".8" width="7" height="7"/></g></svg>
<svg class="a" style="left:317.4px;top:435.0px" width="10" height="10" viewBox="0 0 10 10"><path d="M5 .6l4.2 4.4L5 9.4.8 5z" fill="#f6dc20" stroke="#6a5a00" stroke-width=".8"/><path d="M5 2.4v5.2M2.4 5h5.2" stroke="#4a4000" stroke-width=".8"/></svg>
<svg class="a" style="left:330px;top:435.5px" width="11" height="9" viewBox="0 0 11 9"><path d="M.6 2l4 2 1-2 1 2 4-2-2 3.4 2 2.6-4-1.6-1 1.8-1-1.8-4 1.6 2-2.6z" fill="#e83020" stroke="#901008" stroke-width=".5"/></svg>
<svg class="a" style="left:342.4px;top:440px" width="4" height="3" viewBox="0 0 4 3"><path d="M0 0h4l-2 2.4z" fill="#222"/></svg>
<svg class="a" style="left:350.4px;top:435.0px" width="10" height="10" viewBox="0 0 10 10"><circle cx="2.6" cy="7" r="2" fill="#f6dc20" stroke="#555" stroke-width=".6"/><path d="M4 5.6l1.6-1.6" stroke="#333" stroke-width=".8"/><path d="M6 .8h3M6 .8v4M6 2.6h2.4" stroke="#111" stroke-width=".9" fill="none"/></svg>
<svg class="a" style="left:366.5px;top:435.0px" width="10" height="10" viewBox="0 0 10 10"><rect width="10" height="10" fill="#1c2e9a"/><circle cx="5" cy="5" r="1.8" fill="#f8e020"/><path d="M5 .6L3.6 2.4h2.8zM5 9.4L3.6 7.6h2.8zM.6 5l1.8-1.4v2.8zM9.4 5L7.6 3.6v2.8z" fill="#fff"/></svg>
<svg class="a" style="left:379.2px;top:440px" width="4" height="3" viewBox="0 0 4 3"><path d="M0 0h4l-2 2.4z" fill="#222"/></svg>
<div class="a" style="left:386.4px;top:435px;width:1px;height:11px;background:#9fb0c8;"></div>
<div class="t" style="left:390.8px;top:436px;font-family:'Liberation Serif',serif;font-weight:bold;font-style:italic;font-size:9.4px;color:#1428b8;line-height:9px;height:9px">M</div>
<svg class="a" style="left:404.2px;top:435.5px" width="9" height="9" viewBox="0 0 9 9"><rect x=".5" y=".5" width="8" height="8" fill="#e8f0ff" stroke="#3a55a8" stroke-width=".9"/><circle cx="4.5" cy="4.6" r="2" fill="#d84040"/><circle cx="5.6" cy="3.6" r="1.1" fill="#38a0a8"/></svg>
<svg class="a" style="left:417.4px;top:438.6px" width="4" height="7" viewBox="0 0 4 7"><path d="M0 1h4" stroke="#222" stroke-width=".8"/><path d="M0 3.4h4l-2 2.4z" fill="#222"/></svg>
<svg class="a" style="left:425px;top:435px" width="2" height="10" viewBox="0 0 2 10"><path d="M1 0v10" stroke="#7f8fa8" stroke-width="1" stroke-dasharray="1 1"/></svg>
<div class="a" style="left:429.4px;top:433.6px;width:12.4px;height:12.6px;background:#fde9b8;border:1px solid #e5b35a;border-radius:1.5px"></div>
<svg class="a" style="left:432.6px;top:435.0px" width="7" height="10" viewBox="0 0 7 10"><path d="M1 .6v7.6l1.9-1.7 1.3 3 1.2-.5-1.3-2.9h2.5z" fill="#fff" stroke="#222" stroke-width=".7"/></svg>
<svg class="a" style="left:443.6px;top:435.0px" width="10" height="10" viewBox="0 0 10 10"><circle cx="5" cy="5" r="2.6" fill="none" stroke="#111" stroke-width="1"/><path d="M5 0L3.4 2h3.2zM5 10L3.4 8h3.2zM0 5l2-1.6v3.2zM10 5L8 3.400v3.2z" fill="#111"/></svg>
<svg class="a" style="left:457.4px;top:435.0px" width="9" height="10" viewBox="0 0 9 10"><path d="M7.4 3.200A3.300 3.300 0 1 0 7.800 6.400" fill="none" stroke="#111" stroke-width="1.3"/><path d="M5 .4h3.600v3.400z" fill="#111"/></svg>
<svg class="a" style="left:470.4px;top:435.0px" width="10" height="10" viewBox="0 0 10 10"><path d="M5 1v8M1 5h8" stroke="#111" stroke-width="1.1"/><path d="M5 0L3.400 2h3.200zM5 10L3.400 8h3.200zM0 5l2-1.600v3.200zM10 5L8 3.400v3.200z" fill="#111"/></svg>
<svg class="a" style="left:483.4px;top:435.0px" width="9" height="10" viewBox="0 0 9 10"><path d="M1 1.200l7 7.600M8 1.200L1 8.800" stroke="#111" stroke-width=".9"/><rect x="2.600" y="3.200" width="3.800" height="3.600" fill="#c0d1e8" stroke="#111" stroke-width=".8"/><path d="M0 .2h2.400L0 2.600zM9 .2H6.600L9 2.600zM0 9.800h2.400L0 7.400zM9 9.800H6.600L9 7.400z" fill="#111"/></svg>
<svg class="a" style="left:495.6px;top:435.5px" width="10" height="9" viewBox="0 0 10 9"><path d="M8.600 1L1.200 4.500 8.600 8z" fill="none" stroke="#111" stroke-width="1.1"/></svg>
<svg class="a" style="left:510px;top:435.5px" width="9" height="9" viewBox="0 0 9 9"><path d="M1 8h7M2 8l.600-3h3.800L7 8M3 5l.4-1.600h2.200L6 5M4.500 .6v2.800M3 2h3" fill="none" stroke="#111" stroke-width=".9"/></svg>
<svg class="a" style="left:523.4px;top:435.5px" width="9" height="9" viewBox="0 0 9 9"><circle cx="4.500" cy="4.800" r="2.200" fill="none" stroke="#111" stroke-width="1.100"/><path d="M4.500 0v1.800M4.500 7.800v1.600M0 4.800h1.600M7.400 4.800H9M1.200 1.600l1.200 1.200M7.800 1.600L6.600 2.800M1.200 8l1.200-1.200M7.800 8L6.600 6.800" stroke="#111" stroke-width=".7"/></svg>
<svg class="a" style="left:536px;top:435.5px" width="9" height="9" viewBox="0 0 9 9"><rect x=".5" y=".5" width="5" height="5" fill="#c9ccd2" stroke="#8a909a" stroke-width=".7"/><rect x="3.500" y="4" width="4.600" height="4.400" fill="#a0a6b0"/></svg>
<svg class="a" style="left:549px;top:435.5px" width="10" height="9" viewBox="0 0 10 9"><rect x=".5" y=".5" width="5" height="5" fill="#a8aeb8" stroke="#6a7078" stroke-width=".7"/><rect x="4" y="4" width="5" height="4.600" fill="#7e8690"/></svg>
<svg class="a" style="left:563.2px;top:438.6px" width="4" height="7" viewBox="0 0 4 7"><path d="M0 1h4" stroke="#222" stroke-width=".8"/><path d="M0 3.4h4l-2 2.4z" fill="#222"/></svg>
<svg class="a" style="left:571.4px;top:435px" width="2" height="10" viewBox="0 0 2 10"><path d="M1 0v10" stroke="#7f8fa8" stroke-width="1" stroke-dasharray="1 1"/></svg>
<svg class="a" style="left:576px;top:435.5px" width="10" height="9" viewBox="0 0 10 9"><path d="M.6 0v8.600M2.400 8.400V3.500M4.400 8.400V3.500M6.400 8.400V3.500M8.400 8.400V3.500M2.400 8.400h6.200" fill="none" stroke="#222" stroke-width=".8"/></svg>
<svg class="a" style="left:589.6px;top:435.5px" width="10" height="9" viewBox="0 0 10 9"><path d="M5 .8L9 8.400H1z" fill="none" stroke="#222" stroke-width=".9"/></svg>
<svg class="a" style="left:602.4px;top:435.5px" width="9" height="9" viewBox="0 0 9 9"><path d="M1 8.400c0-2.400 1-3.600 2.600-4.400M5 .6c2.400.4 2.800 2.800 1 3.400S3.400 2.200 5 .6M6 4l2 3" fill="none" stroke="#222" stroke-width=".9"/></svg>
<svg class="a" style="left:616px;top:435.5px" width="10" height="9" viewBox="0 0 10 9"><path d="M1 6l4.400-4.400 3.200 1.200L5 7.200zM1 6l1.200 2 2.800-.8" fill="#f4f6fa" stroke="#222" stroke-width=".8"/></svg>
<svg class="a" style="left:629.6px;top:438.6px" width="4" height="7" viewBox="0 0 4 7"><path d="M0 1h4" stroke="#222" stroke-width=".8"/><path d="M0 3.4h4l-2 2.4z" fill="#222"/></svg>
<div class="a" style="left:4.8px;top:448.4px;width:705.2px;height:11.8px;background:#2a3c69;"></div>
<div class="t w" style="left:6.7px;top:451.1px;font-size:6.85px">Success. 24 polyhedra created.</div>
<div class="a" style="left:253.3px;top:449.6px;width:1px;height:10px;background:#5d75a3;"></div>
<div class="a" style="left:348.8px;top:449.6px;width:1px;height:10px;background:#5d75a3;"></div>
<div class="a" style="left:365.7px;top:449.6px;width:1px;height:10px;background:#5d75a3;"></div>
<div class="a" style="left:428.7px;top:449.6px;width:1px;height:10px;background:#5d75a3;"></div>
<div class="a" style="left:468.4px;top:449.6px;width:1px;height:10px;background:#5d75a3;"></div>
<div class="a" style="left:494.2px;top:449.6px;width:1px;height:10px;background:#5d75a3;"></div>
<div class="a" style="left:536.2px;top:449.6px;width:1px;height:10px;background:#5d75a3;"></div>
<div class="a" style="left:579.4px;top:449.6px;width:1px;height:10px;background:#5d75a3;"></div>
<div class="a" style="left:622.2px;top:449.6px;width:1px;height:10px;background:#5d75a3;"></div>
<div class="a" style="left:660.4px;top:449.6px;width:1px;height:10px;background:#5d75a3;"></div>
<div class="t w" style="left:352.2px;top:451.1px;font-size:6.85px">APC</div>
<div class="a" style="left:366.6px;top:450.2px;width:61px;height:9.4px;background:#fbd6a4;border:1px solid #f0b968"></div>
<div class="t " style="left:369px;top:451.1px;font-size:6.85px;color:#16264a">Auto Picture</div>
<div class="t w" style="left:431.4px;top:451.1px;font-size:6.85px">Y. 0.731839</div>
<div class="t " style="left:498.8px;top:451.1px;font-size:6.85px;color:#fff">28 parms</div>
<div class="t " style="left:540.8px;top:451.1px;font-size:6.85px;color:#ffe94a">2/108 at.</div>
<div class="t " style="left:583.6px;top:451.1px;font-size:6.85px;color:#fff">93 bonds</div>
<div class="t " style="left:626.4px;top:451.1px;font-size:6.85px;color:#fff">polymeric</div>
<div class="t " style="left:664.6px;top:451.1px;font-size:6.85px;color:#fff">24 polyh.</div>
<svg class="a" style="left:702px;top:453px" width="7" height="7" viewBox="0 0 7 7"><g fill="#8ea0c4"><rect x="5" y="0" width="1.300" height="1.300"/><rect x="2.500" y="2.500" width="1.300" height="1.300"/><rect x="5" y="2.500" width="1.300" height="1.300"/><rect x="0" y="5" width="1.300" height="1.300"/><rect x="2.500" y="5" width="1.300" height="1.300"/><rect x="5" y="5" width="1.300" height="1.300"/></g></svg>
</div></body></html>
